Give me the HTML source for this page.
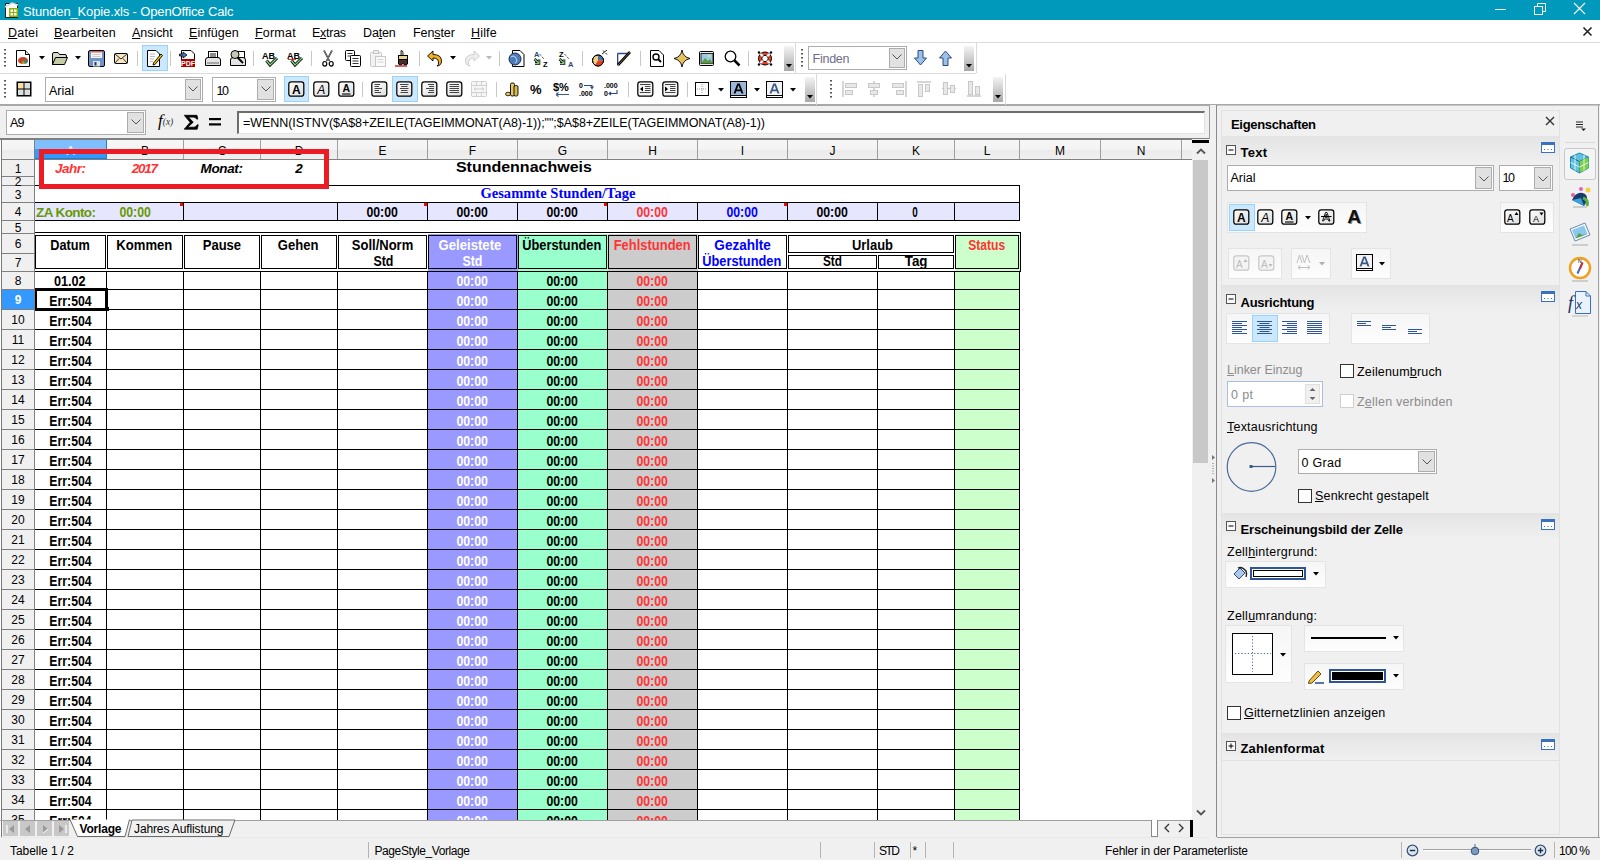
<!DOCTYPE html>
<html><head><meta charset="utf-8"><style>
html,body{margin:0;padding:0;width:1600px;height:860px;overflow:hidden;background:#fff;}
body{position:relative;font-family:"Liberation Sans",sans-serif;}
body>div,body>svg{position:absolute;}
body>div{white-space:nowrap;}
</style></head><body>
<div style="left:0px;top:0px;width:1600px;height:20px;background:#0099bc"></div>
<svg style="left:4px;top:2px;" width="16" height="16" viewBox="0 0 16 16"><rect x="1.5" y="1.5" width="12" height="14" fill="#fff" stroke="#1a2030"/><rect x="5" y="6" width="9" height="9" fill="#8fb300"/><rect x="6.5" y="7.5" width="2.5" height="2.5" fill="#fff"/><rect x="10" y="7.5" width="2.5" height="2.5" fill="#fff"/><rect x="6.5" y="11" width="2.5" height="2.5" fill="#fff"/><rect x="10" y="11" width="2.5" height="2.5" fill="#fff"/><path d="M1 5 L8 1 L14 3" stroke="#ddd" stroke-width="1.5" fill="none"/></svg>
<div style="left:23.00px;top:4.50px;font-family:'Liberation Sans',sans-serif;font-size:13px;line-height:13px;height:13px;color:#fff;letter-spacing:-0.135px;">Stunden_Kopie.xls - OpenOffice Calc</div>
<svg style="left:1494px;top:3px;" width="14" height="12" viewBox="0 0 14 12"><path d="M1 6.5 H12" stroke="#fff" stroke-width="1"/></svg>
<svg style="left:1533px;top:2px;" width="14" height="14" viewBox="0 0 14 14"><rect x="1.5" y="4.5" width="8" height="8" fill="none" stroke="#fff"/><path d="M4.5 4.5 V1.5 H12.5 V9.5 H9.5" fill="none" stroke="#fff"/></svg>
<svg style="left:1573px;top:2px;" width="14" height="14" viewBox="0 0 14 14"><path d="M1 1 L12 12 M12 1 L1 12" stroke="#fff" stroke-width="1.1"/></svg>
<div style="left:0px;top:20px;width:1600px;height:22px;background:#fff"></div>
<div style="left:0px;top:42px;width:1600px;height:1px;background:#dcdcdc"></div>
<div style="left:8.00px;top:26.92px;font-family:'Liberation Sans',sans-serif;font-size:12.5px;line-height:12.5px;height:12.5px;color:#000;letter-spacing:0.206px;"><u>D</u>atei</div>
<div style="left:54.00px;top:26.92px;font-family:'Liberation Sans',sans-serif;font-size:12.5px;line-height:12.5px;height:12.5px;color:#000;letter-spacing:0.138px;"><u>B</u>earbeiten</div>
<div style="left:132.00px;top:26.92px;font-family:'Liberation Sans',sans-serif;font-size:12.5px;line-height:12.5px;height:12.5px;color:#000;letter-spacing:-0.048px;"><u>A</u>nsicht</div>
<div style="left:189.00px;top:26.92px;font-family:'Liberation Sans',sans-serif;font-size:12.5px;line-height:12.5px;height:12.5px;color:#000;letter-spacing:0.057px;"><u>E</u>infügen</div>
<div style="left:255.00px;top:26.92px;font-family:'Liberation Sans',sans-serif;font-size:12.5px;line-height:12.5px;height:12.5px;color:#000;letter-spacing:0.203px;"><u>F</u>ormat</div>
<div style="left:312.00px;top:26.92px;font-family:'Liberation Sans',sans-serif;font-size:12.5px;line-height:12.5px;height:12.5px;color:#000;letter-spacing:-0.265px;">E<u>x</u>tras</div>
<div style="left:363.00px;top:26.92px;font-family:'Liberation Sans',sans-serif;font-size:12.5px;line-height:12.5px;height:12.5px;color:#000;letter-spacing:-0.138px;">Da<u>t</u>en</div>
<div style="left:413.00px;top:26.92px;font-family:'Liberation Sans',sans-serif;font-size:12.5px;line-height:12.5px;height:12.5px;color:#000;letter-spacing:-0.096px;">Fen<u>s</u>ter</div>
<div style="left:471.00px;top:26.92px;font-family:'Liberation Sans',sans-serif;font-size:12.5px;line-height:12.5px;height:12.5px;color:#000;letter-spacing:0.172px;"><u>H</u>ilfe</div>
<svg style="left:1582px;top:26px;" width="12" height="12" viewBox="0 0 12 12"><path d="M1.5 1.5 L9.5 9.5 M9.5 1.5 L1.5 9.5" stroke="#222" stroke-width="1.6"/></svg>
<div style="left:0px;top:43px;width:1600px;height:62px;background:#fff"></div>
<div style="left:0px;top:73px;width:976px;height:1px;background:#dadada"></div>
<div style="left:976px;top:73px;width:624px;height:1px;background:#fff"></div>
<div style="left:0px;top:104px;width:1600px;height:2px;background:#a8a8a8"></div>
<svg style="left:4px;top:49px;" width="3" height="20" viewBox="0 0 3 20"><rect x="0" y="0" width="2" height="1.5" fill="#555"/><rect x="1" y="1" width="1" height="1" fill="#999"/><rect x="0" y="4" width="2" height="1.5" fill="#555"/><rect x="1" y="5" width="1" height="1" fill="#999"/><rect x="0" y="8" width="2" height="1.5" fill="#555"/><rect x="1" y="9" width="1" height="1" fill="#999"/><rect x="0" y="12" width="2" height="1.5" fill="#555"/><rect x="1" y="13" width="1" height="1" fill="#999"/><rect x="0" y="16" width="2" height="1.5" fill="#555"/><rect x="1" y="17" width="1" height="1" fill="#999"/></svg>
<svg style="left:16px;top:50px;" width="14" height="17" viewBox="0 0 14 17"><path d="M0.5 0.5 H9.5 L13.5 4.5 V16.5 H0.5 Z" fill="#fff" stroke="#000"/><path d="M9.5 0.5 V4.5 H13.5" fill="#ddd" stroke="#000"/><ellipse cx="7" cy="10.5" rx="5" ry="3.6" fill="#c8452a"/><path d="M7 10.5 L12 10.5 A5 3.6 0 0 1 9 13.8 Z" fill="#1f8fa0"/><path d="M7 10.5 L9 13.8 A5 3.6 0 0 1 6 14 Z" fill="#b8b800"/></svg>
<svg style="left:39px;top:56px;" width="6" height="4" viewBox="0 0 6 4"><path d="M0 0 H6 L3 3.5 Z" fill="#000"/></svg>
<svg style="left:52px;top:52px;" width="16" height="13" viewBox="0 0 16 13"><path d="M0.5 2 Q0.5 0.5 2 0.5 H6 L7.5 2.5 H13 Q14.5 2.5 14.5 4 V6 H4 L0.5 12.5 Z" fill="#d9dcc4" stroke="#000"/><path d="M3.5 5.5 H15.5 L12.5 12.5 H0.5 Z" fill="#c6cba6" stroke="#000"/></svg>
<svg style="left:75px;top:56px;" width="6" height="4" viewBox="0 0 6 4"><path d="M0 0 H6 L3 3.5 Z" fill="#000"/></svg>
<svg style="left:88px;top:50px;" width="17" height="17" viewBox="0 0 17 17"><rect x="0.5" y="0.5" width="16" height="16" rx="1.5" fill="#7093c8" stroke="#000"/><rect x="3" y="1" width="11" height="7" fill="#f4f4f4"/><rect x="3" y="1" width="11" height="1.5" fill="#e06060"/><path d="M4.5 4.5 H12.5 M4.5 6.5 H12.5" stroke="#bbb" stroke-width="0.7"/><rect x="5" y="11" width="7" height="5.5" fill="#dde4ee"/><rect x="6.5" y="12" width="2" height="3.5" fill="#243a5e"/></svg>
<svg style="left:114px;top:53px;" width="14" height="11" viewBox="0 0 14 11"><rect x="0.5" y="0.5" width="13" height="10" rx="1" fill="#f6e7c4" stroke="#000"/><path d="M1 1 L7 6 L13 1 M1 10 L5 5.5 M13 10 L9 5.5" stroke="#000" stroke-width="0.8" fill="none"/></svg>
<div style="left:137px;top:51px;width:1px;height:15px;background:#c8c8c8"></div>
<div style="left:142px;top:45px;width:24px;height:24px;background:#cce8ff;border:1px solid #99d1ff"></div>
<svg style="left:147px;top:50px;" width="16" height="17" viewBox="0 0 16 17"><path d="M0.5 0.5 H9 L12.5 4 V16.5 H0.5 Z" fill="#fff" stroke="#000"/><path d="M3 4H8M3 6.5H8M3 9H7M3 11.5H6" stroke="#aaa" stroke-width="0.8"/><path d="M6.5 13 L14 4 L15.5 5.5 L8 14.5 L6 15 Z" fill="#f2c200" stroke="#000" stroke-width="0.9"/></svg>
<div style="left:170px;top:51px;width:1px;height:15px;background:#c8c8c8"></div>
<svg style="left:179px;top:50px;" width="17" height="17" viewBox="0 0 17 17"><path d="M2.5 0.5 H12 L15.5 4 V16.5 H2.5 Z" fill="#fff" stroke="#000"/><rect x="2" y="9" width="14" height="8" fill="#a80000"/><text x="9" y="15.8" font-family="Liberation Sans" font-weight="bold" font-size="7" fill="#fff" text-anchor="middle">PDF</text><path d="M0.5 4 H4 V2 L8 5 L4 8 V6 H0.5 Z" fill="#4a7ab8" stroke="#000" stroke-width="0.8"/></svg>
<svg style="left:205px;top:51px;" width="16" height="16" viewBox="0 0 16 16"><rect x="3.5" y="0.5" width="9" height="8" fill="#fff" stroke="#000"/><path d="M5 3H11M5 5H11" stroke="#000" stroke-width="0.9"/><path d="M0.5 9 Q0.5 6.5 3 6.5 H13 Q15.5 6.5 15.5 9 V14.5 H0.5 Z" fill="#e4e4e4" stroke="#000"/><path d="M2 12 H14" stroke="#666" stroke-width="1"/></svg>
<svg style="left:230px;top:50px;" width="16" height="17" viewBox="0 0 16 17"><rect x="5.5" y="1.5" width="9" height="8" fill="#fff" stroke="#000"/><path d="M0.5 10 Q0.5 7.5 3 7.5 H13 Q15.5 7.5 15.5 10 V15.5 H0.5 Z" fill="#e4e4e4" stroke="#000"/><circle cx="5" cy="4.5" r="4" fill="#c8c8b4" stroke="#000"/><path d="M7.5 7.5 L13 13" stroke="#000" stroke-width="1.8"/></svg>
<div style="left:253px;top:51px;width:1px;height:15px;background:#c8c8c8"></div>
<svg style="left:262px;top:50px;" width="17" height="17" viewBox="0 0 17 17"><text x="0" y="9" font-family="Liberation Sans" font-weight="bold" font-size="9" fill="#000">AB</text><path d="M4.5 10.5 L8 15 L15 8" stroke="#000" stroke-width="3" fill="none"/><path d="M4.5 10.5 L8 15 L15 8" stroke="#7ed07e" stroke-width="1.4" fill="none"/></svg>
<svg style="left:287px;top:50px;" width="17" height="17" viewBox="0 0 17 17"><text x="0" y="9" font-family="Liberation Sans" font-weight="bold" font-size="9" fill="#000">AB</text><path d="M1 10 l1 -1 l1 1 l1 -1 l1 1 l1 -1 l1 1 l1 -1 l1 1" stroke="#e00" stroke-width="0.8" fill="none"/><path d="M4.5 10.5 L8 15 L15 8" stroke="#000" stroke-width="3" fill="none"/><path d="M4.5 10.5 L8 15 L15 8" stroke="#7ed07e" stroke-width="1.4" fill="none"/></svg>
<div style="left:311px;top:51px;width:1px;height:15px;background:#c8c8c8"></div>
<svg style="left:322px;top:50px;" width="12" height="17" viewBox="0 0 12 17"><path d="M2 0.5 L7.5 11 M10 0.5 L4.5 11" stroke="#000" stroke-width="1.6"/><path d="M2 0.5 L7.5 11 M10 0.5 L4.5 11" stroke="#d8d8c8" stroke-width="0.6"/><ellipse cx="2.8" cy="13.8" rx="2" ry="2.3" fill="none" stroke="#000" stroke-width="1.2"/><ellipse cx="9.2" cy="13.8" rx="2" ry="2.3" fill="none" stroke="#000" stroke-width="1.2"/></svg>
<svg style="left:345px;top:50px;" width="16" height="17" viewBox="0 0 16 17"><rect x="0.5" y="0.5" width="9" height="10" rx="1" fill="#fff" stroke="#000"/><path d="M2.5 3.5H7.5M2.5 6H7.5" stroke="#000" stroke-width="0.8"/><rect x="5.5" y="5.5" width="10" height="11" rx="1" fill="#fff" stroke="#000"/><path d="M7.5 8.5H13.5M7.5 11H13.5M7.5 13.5H13.5" stroke="#000" stroke-width="0.8"/></svg>
<svg style="left:370px;top:50px;" width="16" height="17" viewBox="0 0 16 17"><rect x="0.5" y="2.5" width="11" height="14" rx="1" fill="#f2f2f2" stroke="#c8c8c8"/><rect x="3.5" y="0.5" width="5" height="3" fill="#eee" stroke="#c8c8c8"/><rect x="5.5" y="6.5" width="10" height="10" fill="#fafafa" stroke="#c8c8c8"/><path d="M7.5 9.5H13.5M7.5 12H13.5" stroke="#ccc" stroke-width="0.8"/></svg>
<svg style="left:395px;top:50px;" width="16" height="17" viewBox="0 0 16 17"><path d="M6 0.5 Q8 0.5 8 2.5 V5.5 H6 Z" fill="#d8d2a8" stroke="#000" stroke-width="0.8"/><rect x="3.5" y="5.5" width="9" height="4" fill="#e8d490" stroke="#000"/><path d="M3.5 9.5 H12.5 V14 L10 15 L8 13.5 L5.5 15 L3.5 14 Z" fill="#4a2c2c" stroke="#000"/><path d="M0 16 H12" stroke="#b82020" stroke-width="1.4"/></svg>
<div style="left:419px;top:51px;width:1px;height:15px;background:#c8c8c8"></div>
<svg style="left:427px;top:50px;" width="15" height="17" viewBox="0 0 15 17"><path d="M6 1 L0.5 6 L6 11 V8 Q11 8 11.5 12 Q12 15 10 16 Q14.5 15.5 14.5 11 Q14.5 4.5 6 4.5 Z" fill="#f0b020" stroke="#000" stroke-width="0.9"/></svg>
<svg style="left:450px;top:56px;" width="6" height="4" viewBox="0 0 6 4"><path d="M0 0 H6 L3 3.5 Z" fill="#000"/></svg>
<svg style="left:465px;top:50px;" width="15" height="17" viewBox="0 0 15 17"><path d="M9 1 L14.5 6 L9 11 V8 Q4 8 3.5 12 Q3 15 5 16 Q0.5 15.5 0.5 11 Q0.5 4.5 9 4.5 Z" fill="#eee" stroke="#c8c8c8" stroke-width="0.9"/></svg>
<svg style="left:486px;top:56px;" width="6" height="4" viewBox="0 0 6 4"><path d="M0 0 H6 L3 3.5 Z" fill="#b8b8b8"/></svg>
<div style="left:499px;top:51px;width:1px;height:15px;background:#c8c8c8"></div>
<svg style="left:508px;top:50px;" width="17" height="17" viewBox="0 0 17 17"><path d="M4.5 0.5 H12 L16 4.5 V16.5 H4.5 Z" fill="#fff" stroke="#000"/><circle cx="7" cy="9" r="6" fill="#4d7ab8" stroke="#1b2b45"/><path d="M3 7 Q6 5 8 8 Q10 11 7 13" stroke="#a8c8e8" stroke-width="1.2" fill="none"/></svg>
<svg style="left:533px;top:50px;" width="17" height="17" viewBox="0 0 17 17"><text x="1" y="7" font-family="Liberation Sans" font-weight="bold" font-size="7.5" fill="#2a4a7a">A</text><text x="10" y="16.5" font-family="Liberation Sans" font-weight="bold" font-size="7.5" fill="#000">Z</text><path d="M6.5 4 L11 9" stroke="#000" stroke-dasharray="1 1" stroke-width="0.9"/><path d="M1.5 9 L6 13.5 M6 9.5 V13.5 H2" stroke="#000" stroke-width="2.6" fill="none"/><path d="M1.5 9 L6 13.5 M6 9.5 V13.5 H2" stroke="#8cc88c" stroke-width="1.1" fill="none"/></svg>
<svg style="left:558px;top:50px;" width="17" height="17" viewBox="0 0 17 17"><text x="1" y="7" font-family="Liberation Sans" font-weight="bold" font-size="7.5" fill="#000">Z</text><text x="10" y="16.5" font-family="Liberation Sans" font-weight="bold" font-size="7.5" fill="#2a4a7a">A</text><path d="M6.5 4 L11 9" stroke="#000" stroke-dasharray="1 1" stroke-width="0.9"/><path d="M1.5 9 L6 13.5 M6 9.5 V13.5 H2" stroke="#000" stroke-width="2.6" fill="none"/><path d="M1.5 9 L6 13.5 M6 9.5 V13.5 H2" stroke="#8cc88c" stroke-width="1.1" fill="none"/></svg>
<div style="left:582px;top:51px;width:1px;height:15px;background:#c8c8c8"></div>
<svg style="left:592px;top:50px;" width="16" height="17" viewBox="0 0 16 17"><circle cx="6" cy="10.5" r="5.5" fill="#f0d080" stroke="#000"/><path d="M6 10.5 L6 5 A5.5 5.5 0 0 1 11.5 10.5 Z" fill="#4a70b0"/><path d="M6 10.5 L11.5 10.5 A5.5 5.5 0 0 1 3 15.2 Z" fill="#e04020"/><circle cx="6" cy="10.5" r="5.5" fill="none" stroke="#000"/><path d="M10 4 L15 0 M11 0.5 l1.5 1.5 M13.5 3 l1.5 1.5" stroke="#000" stroke-width="0.9"/></svg>
<svg style="left:617px;top:50px;" width="15" height="17" viewBox="0 0 15 17"><path d="M0.5 3.5 H12 M0.5 3.5 V15.5" stroke="#2a4a8a" stroke-width="1.6"/><path d="M1 15 L13 2" stroke="#000" stroke-width="2.6"/><path d="M1 15 L13 2" stroke="#7a6040" stroke-width="1"/></svg>
<div style="left:640px;top:51px;width:1px;height:15px;background:#c8c8c8"></div>
<svg style="left:650px;top:50px;" width="14" height="17" viewBox="0 0 14 17"><path d="M0.5 0.5 H9 L13.5 5 V16.5 H0.5 Z" fill="#fff" stroke="#000"/><circle cx="6" cy="7" r="3" fill="#fff" stroke="#000" stroke-width="1.4"/><path d="M8 9 L11 12" stroke="#000" stroke-width="2"/></svg>
<svg style="left:674px;top:50px;" width="16" height="17" viewBox="0 0 16 17"><path d="M8 0 Q9 7 16 8.5 Q9 10 8 17 Q7 10 0 8.5 Q7 7 8 0 Z" fill="#e8c060" stroke="#000" stroke-width="0.9"/></svg>
<svg style="left:699px;top:50px;" width="16" height="17" viewBox="0 0 16 17"><rect x="0.5" y="1.5" width="14" height="14" rx="1" fill="#eee" stroke="#000"/><rect x="2" y="3.5" width="12" height="10" fill="#9ec8e8" stroke="#000" stroke-width="0.8"/><path d="M2 13.5 L6 8 L9 11 L11 9 L14 13.5 Z" fill="#5a9a40"/><circle cx="10" cy="6" r="1.2" fill="#f8e060"/></svg>
<svg style="left:724px;top:50px;" width="17" height="17" viewBox="0 0 17 17"><circle cx="6.5" cy="6.5" r="5.3" fill="#fff" stroke="#000" stroke-width="1.3"/><path d="M10.5 10.5 L15.5 15.5" stroke="#000" stroke-width="2.5"/></svg>
<div style="left:748px;top:51px;width:1px;height:15px;background:#c8c8c8"></div>
<svg style="left:757px;top:50px;" width="16" height="17" viewBox="0 0 16 17"><circle cx="8" cy="8.5" r="6.5" fill="#e84020" stroke="#000"/><circle cx="8" cy="8.5" r="3.2" fill="#fff" stroke="#000"/><path d="M3.5 4 L5.8 6.3 M12.5 4 L10.2 6.3 M3.5 13 L5.8 10.7 M12.5 13 L10.2 10.7" stroke="#fff" stroke-width="2.2"/><circle cx="2" cy="2.5" r="1.2" fill="#000"/><circle cx="14" cy="2.5" r="1.2" fill="#000"/><circle cx="2" cy="14.5" r="1.2" fill="#000"/><circle cx="14" cy="14.5" r="1.2" fill="#000"/></svg>
<div style="left:784px;top:46px;width:10px;height:25px;background:linear-gradient(#f4f4f4,#a8a8a8)"></div>
<svg style="left:786px;top:64px;" width="6" height="4" viewBox="0 0 6 4"><path d="M0 0 H6 L3 3.5 Z" fill="#000"/></svg>
<div style="left:795px;top:43px;width:1px;height:30px;background:#dadada"></div>
<div style="left:976px;top:43px;width:1px;height:30px;background:#dadada"></div>
<svg style="left:801px;top:49px;" width="3" height="20" viewBox="0 0 3 20"><rect x="0" y="0" width="2" height="1.5" fill="#555"/><rect x="1" y="1" width="1" height="1" fill="#999"/><rect x="0" y="4" width="2" height="1.5" fill="#555"/><rect x="1" y="5" width="1" height="1" fill="#999"/><rect x="0" y="8" width="2" height="1.5" fill="#555"/><rect x="1" y="9" width="1" height="1" fill="#999"/><rect x="0" y="12" width="2" height="1.5" fill="#555"/><rect x="1" y="13" width="1" height="1" fill="#999"/><rect x="0" y="16" width="2" height="1.5" fill="#555"/><rect x="1" y="17" width="1" height="1" fill="#999"/></svg>
<div style="left:808px;top:46px;width:99px;height:24px;background:#fff;border:1px solid #adadad;box-sizing:border-box"></div>
<div style="left:889px;top:48px;width:16px;height:20px;background:#e1e1e1;border:1px solid #adadad;box-sizing:border-box"></div>
<svg style="left:892px;top:54px;" width="10" height="6" viewBox="0 0 10 6"><path d="M0.5 0.5 L5 5 L9.5 0.5" stroke="#555" fill="none"/></svg>
<div style="left:812.50px;top:53.42px;font-family:'Liberation Sans',sans-serif;font-size:12.5px;line-height:12.5px;height:12.5px;color:#6d6d8d;letter-spacing:-0.245px;">Finden</div>
<svg style="left:914px;top:50px;" width="13" height="16" viewBox="0 0 13 16"><path d="M4 0.5 H9 V8 H12.5 L6.5 15 L0.5 8 H4 Z" fill="#9cc0e8" stroke="#2a4a80"/></svg>
<svg style="left:939px;top:50px;" width="13" height="16" viewBox="0 0 13 16"><path d="M4 15.5 H9 V8 H12.5 L6.5 1 L0.5 8 H4 Z" fill="#9cc0e8" stroke="#2a4a80"/></svg>
<div style="left:964px;top:46px;width:10px;height:25px;background:linear-gradient(#f4f4f4,#a8a8a8)"></div>
<svg style="left:966px;top:64px;" width="6" height="4" viewBox="0 0 6 4"><path d="M0 0 H6 L3 3.5 Z" fill="#000"/></svg>
<svg style="left:4px;top:80px;" width="3" height="20" viewBox="0 0 3 20"><rect x="0" y="0" width="2" height="1.5" fill="#555"/><rect x="1" y="1" width="1" height="1" fill="#999"/><rect x="0" y="4" width="2" height="1.5" fill="#555"/><rect x="1" y="5" width="1" height="1" fill="#999"/><rect x="0" y="8" width="2" height="1.5" fill="#555"/><rect x="1" y="9" width="1" height="1" fill="#999"/><rect x="0" y="12" width="2" height="1.5" fill="#555"/><rect x="1" y="13" width="1" height="1" fill="#999"/><rect x="0" y="16" width="2" height="1.5" fill="#555"/><rect x="1" y="17" width="1" height="1" fill="#999"/></svg>
<svg style="left:16px;top:81px;" width="16" height="16" viewBox="0 0 16 16"><rect x="0.5" y="0.5" width="15" height="15" fill="#000"/><rect x="2" y="2" width="5.5" height="5.5" fill="#f8e0a0"/><rect x="8.5" y="2" width="5.5" height="5.5" fill="#ddd"/><rect x="2" y="8.5" width="5.5" height="5.5" fill="#ddd"/><rect x="8.5" y="8.5" width="5.5" height="5.5" fill="#ddd"/></svg>
<div style="left:45px;top:77px;width:158px;height:25px;background:#fff;border:1px solid #adadad;box-sizing:border-box"></div>
<div style="left:185px;top:79px;width:16px;height:21px;background:#e1e1e1;border:1px solid #adadad;box-sizing:border-box"></div>
<svg style="left:188px;top:86px;" width="10" height="6" viewBox="0 0 10 6"><path d="M0.5 0.5 L5 5 L9.5 0.5" stroke="#555" fill="none"/></svg>
<div style="left:49.00px;top:84.92px;font-family:'Liberation Sans',sans-serif;font-size:12.5px;line-height:12.5px;height:12.5px;color:#000;letter-spacing:-0.003px;">Arial</div>
<div style="left:212px;top:77px;width:64px;height:25px;background:#fff;border:1px solid #adadad;box-sizing:border-box"></div>
<div style="left:257px;top:79px;width:17px;height:21px;background:#e1e1e1;border:1px solid #adadad;box-sizing:border-box"></div>
<svg style="left:261px;top:86px;" width="10" height="6" viewBox="0 0 10 6"><path d="M0.5 0.5 L5 5 L9.5 0.5" stroke="#555" fill="none"/></svg>
<div style="left:216.50px;top:84.92px;font-family:'Liberation Sans',sans-serif;font-size:12.5px;line-height:12.5px;height:12.5px;color:#000;letter-spacing:-1.400px;">10</div>
<div style="left:284px;top:76px;width:23px;height:24px;background:#cce8ff;border:1px solid #99d1ff"></div>
<svg style="left:288px;top:81px;" width="17" height="16" viewBox="0 0 17 16"><defs><linearGradient id="g" x1="0" y1="0" x2="1" y2="1"><stop offset="0" stop-color="#fff"/><stop offset="1" stop-color="#ddd"/></linearGradient></defs><rect x="0.8" y="0.8" width="15" height="14.4" rx="2.5" fill="url(#g)" stroke="#000" stroke-width="1.25"/><text x="8.3" y="12.6" font-family="Liberation Sans" font-weight="bold" font-size="12" fill="#000" text-anchor="middle">A</text></svg>
<svg style="left:313px;top:81px;" width="17" height="16" viewBox="0 0 17 16"><defs><linearGradient id="g" x1="0" y1="0" x2="1" y2="1"><stop offset="0" stop-color="#fff"/><stop offset="1" stop-color="#ddd"/></linearGradient></defs><rect x="0.8" y="0.8" width="15" height="14.4" rx="2.5" fill="url(#g)" stroke="#000" stroke-width="1.25"/><text x="8.3" y="12.6" font-family="Liberation Sans" font-style="italic" font-size="12" fill="#000" text-anchor="middle">A</text></svg>
<svg style="left:338px;top:81px;" width="17" height="16" viewBox="0 0 17 16"><defs><linearGradient id="g" x1="0" y1="0" x2="1" y2="1"><stop offset="0" stop-color="#fff"/><stop offset="1" stop-color="#ddd"/></linearGradient></defs><rect x="0.8" y="0.8" width="15" height="14.4" rx="2.5" fill="url(#g)" stroke="#000" stroke-width="1.25"/><text x="8.3" y="11.2" font-family="Liberation Sans" font-weight="bold" font-size="10.5" fill="#000" text-anchor="middle">A</text><path d="M4 13 H12.5" stroke="#000" stroke-width="1.1"/></svg>
<div style="left:362px;top:82px;width:1px;height:15px;background:#c8c8c8"></div>
<svg style="left:371px;top:81px;" width="17" height="16" viewBox="0 0 17 16"><defs><linearGradient id="g2" x1="0" y1="0" x2="1" y2="1"><stop offset="0" stop-color="#fff"/><stop offset="1" stop-color="#ddd"/></linearGradient></defs><rect x="0.8" y="0.8" width="15" height="14.4" rx="2.5" fill="url(#g2)" stroke="#000" stroke-width="1.25"/><path d="M3.5 3.5 H9" stroke="#444" stroke-width="1"/><path d="M3.5 5.5 H8" stroke="#444" stroke-width="1"/><path d="M3.5 7.5 H11" stroke="#444" stroke-width="1"/><path d="M3.5 9.5 H8" stroke="#444" stroke-width="1"/><path d="M3.5 11.5 H10" stroke="#444" stroke-width="1"/></svg>
<div style="left:392px;top:76px;width:24px;height:24px;background:#cce8ff;border:1px solid #99d1ff"></div>
<svg style="left:396px;top:81px;" width="17" height="16" viewBox="0 0 17 16"><defs><linearGradient id="g2" x1="0" y1="0" x2="1" y2="1"><stop offset="0" stop-color="#fff"/><stop offset="1" stop-color="#ddd"/></linearGradient></defs><rect x="0.8" y="0.8" width="15" height="14.4" rx="2.5" fill="url(#g2)" stroke="#000" stroke-width="1.25"/><path d="M4 3.5 H12.5" stroke="#444" stroke-width="1"/><path d="M5 5.5 H11.5" stroke="#444" stroke-width="1"/><path d="M4 7.5 H12.5" stroke="#444" stroke-width="1"/><path d="M5 9.5 H11.5" stroke="#444" stroke-width="1"/><path d="M4.5 11.5 H12" stroke="#444" stroke-width="1"/></svg>
<svg style="left:421px;top:81px;" width="17" height="16" viewBox="0 0 17 16"><defs><linearGradient id="g2" x1="0" y1="0" x2="1" y2="1"><stop offset="0" stop-color="#fff"/><stop offset="1" stop-color="#ddd"/></linearGradient></defs><rect x="0.8" y="0.8" width="15" height="14.4" rx="2.5" fill="url(#g2)" stroke="#000" stroke-width="1.25"/><path d="M7 3.5 H13" stroke="#444" stroke-width="1"/><path d="M8 5.5 H13" stroke="#444" stroke-width="1"/><path d="M5 7.5 H13" stroke="#444" stroke-width="1"/><path d="M8 9.5 H13" stroke="#444" stroke-width="1"/><path d="M7 11.5 H13" stroke="#444" stroke-width="1"/></svg>
<svg style="left:446px;top:81px;" width="17" height="16" viewBox="0 0 17 16"><defs><linearGradient id="g2" x1="0" y1="0" x2="1" y2="1"><stop offset="0" stop-color="#fff"/><stop offset="1" stop-color="#ddd"/></linearGradient></defs><rect x="0.8" y="0.8" width="15" height="14.4" rx="2.5" fill="url(#g2)" stroke="#000" stroke-width="1.25"/><path d="M3.5 3.5 H13" stroke="#444" stroke-width="1"/><path d="M3.5 5.5 H13" stroke="#444" stroke-width="1"/><path d="M3.5 7.5 H13" stroke="#444" stroke-width="1"/><path d="M3.5 9.5 H13" stroke="#444" stroke-width="1"/><path d="M3.5 11.5 H13" stroke="#444" stroke-width="1"/></svg>
<svg style="left:471px;top:81px;" width="16" height="16" viewBox="0 0 16 16"><rect x="0.5" y="0.5" width="15" height="15" rx="1" fill="#f6f6f6" stroke="#d0d0d0"/><path d="M0.5 4.5 H15.5 M0.5 11.5 H15.5 M5.5 0.5 V4.5 M10.5 0.5 V4.5 M5.5 11.5 V15.5 M10.5 11.5 V15.5 M3 8 H13 M3 8 l2 -1.5 M3 8 l2 1.5 M13 8 l-2 -1.5 M13 8 l-2 1.5" stroke="#d0d0d0" fill="none"/></svg>
<div style="left:496px;top:82px;width:1px;height:15px;background:#c8c8c8"></div>
<svg style="left:505px;top:81px;" width="14" height="16" viewBox="0 0 14 16"><ellipse cx="3" cy="13" rx="2.5" ry="1.8" fill="#e8c860" stroke="#000" stroke-width="0.8"/><rect x="5.5" y="2" width="4" height="13" rx="1.5" fill="#e8c860" stroke="#000" stroke-width="0.9"/><rect x="9" y="4.5" width="4" height="10.5" rx="1.5" fill="#d8b850" stroke="#000" stroke-width="0.9"/></svg>
<svg style="left:530px;top:82px;" width="14" height="14" viewBox="0 0 14 14"><text x="0" y="12" font-family="Liberation Sans" font-weight="bold" font-size="13" fill="#000">%</text></svg>
<svg style="left:553px;top:80px;" width="18" height="17" viewBox="0 0 18 17"><text x="0" y="11" font-family="Liberation Sans" font-weight="bold" font-size="11" fill="#000">$%</text><path d="M3 14.5 H16 M3 14.5 l2.5 -2 M3 14.5 l2.5 2" stroke="#3a5a90" stroke-width="1.2" fill="none"/></svg>
<svg style="left:579px;top:81px;" width="16" height="16" viewBox="0 0 16 16"><text x="0" y="7" font-family="Liberation Sans" font-weight="bold" font-size="7" fill="#000">0</text><text x="0" y="15" font-family="Liberation Sans" font-weight="bold" font-size="7" fill="#000">.000</text><path d="M5 4.5 H13 V7 M11.5 5.5 L13 7.5 L14.5 5.5" stroke="#2a4a80" stroke-width="1.1" fill="none"/></svg>
<svg style="left:604px;top:81px;" width="16" height="16" viewBox="0 0 16 16"><text x="0" y="7" font-family="Liberation Sans" font-weight="bold" font-size="7" fill="#000">.000</text><text x="0" y="15" font-family="Liberation Sans" font-weight="bold" font-size="7" fill="#000">0</text><path d="M13 9 V12.5 H5.5 M7 11 L5 12.5 L7 14" stroke="#2a4a80" stroke-width="1.1" fill="none"/></svg>
<div style="left:628px;top:82px;width:1px;height:15px;background:#c8c8c8"></div>
<svg style="left:637px;top:81px;" width="17" height="16" viewBox="0 0 17 16"><rect x="0.8" y="0.8" width="15" height="14.4" rx="2.5" fill="#f4f4f4" stroke="#000" stroke-width="1.25"/><path d="M3 3.5 H13.5 M8 5.5 H13.5 M8 7.5 H13.5 M8 9.5 H13.5 M3 11.5 H13.5" stroke="#444" stroke-width="1"/><path d="M6 5.5 L3 8 L6 10.5 Z" fill="#000"/></svg>
<svg style="left:662px;top:81px;" width="17" height="16" viewBox="0 0 17 16"><rect x="0.8" y="0.8" width="15" height="14.4" rx="2.5" fill="#f4f4f4" stroke="#000" stroke-width="1.25"/><path d="M3 3.5 H13.5 M8 5.5 H13.5 M8 7.5 H13.5 M8 9.5 H13.5 M3 11.5 H13.5" stroke="#444" stroke-width="1"/><path d="M3 5.5 L6 8 L3 10.5 Z" fill="#000"/></svg>
<div style="left:687px;top:82px;width:1px;height:15px;background:#c8c8c8"></div>
<svg style="left:695px;top:81px;" width="14" height="16" viewBox="0 0 14 16"><rect x="0.5" y="1.5" width="13" height="13" fill="#fff" stroke="#000"/><path d="M7 3 V13 M2 8 H12" stroke="#999" stroke-dasharray="1 1"/></svg>
<svg style="left:718px;top:88px;" width="6" height="4" viewBox="0 0 6 4"><path d="M0 0 H6 L3 3.5 Z" fill="#000"/></svg>
<svg style="left:730px;top:81px;" width="17" height="17" viewBox="0 0 17 17"><rect x="0.5" y="0.5" width="16" height="14" fill="#9cb8d8" stroke="#000"/><path d="M3.5 12.5 L7.3 2.5 H9.7 L13.5 12.5 H11.5 L10.7 10.3 H6.3 L5.5 12.5 Z M6.9 8.5 H10.1 L8.5 4.2 Z" fill="#000"/><rect x="0.5" y="14.5" width="16" height="2" fill="#fff" stroke="#000"/></svg>
<svg style="left:754px;top:88px;" width="6" height="4" viewBox="0 0 6 4"><path d="M0 0 H6 L3 3.5 Z" fill="#000"/></svg>
<svg style="left:766px;top:81px;" width="17" height="17" viewBox="0 0 17 17"><rect x="0.5" y="0.5" width="16" height="14" fill="#f4f4f4" stroke="#000"/><path d="M3.5 12.5 L7.3 2.5 H9.7 L13.5 12.5 H11.5 L10.7 10.3 H6.3 L5.5 12.5 Z M6.9 8.5 H10.1 L8.5 4.2 Z" fill="#3a5a88"/><rect x="0.5" y="14.5" width="16" height="2" fill="#fff" stroke="#000"/></svg>
<svg style="left:790px;top:88px;" width="6" height="4" viewBox="0 0 6 4"><path d="M0 0 H6 L3 3.5 Z" fill="#000"/></svg>
<div style="left:805px;top:77px;width:10px;height:25px;background:linear-gradient(#f4f4f4,#a8a8a8)"></div>
<svg style="left:807px;top:95px;" width="6" height="4" viewBox="0 0 6 4"><path d="M0 0 H6 L3 3.5 Z" fill="#000"/></svg>
<div style="left:816px;top:74px;width:1px;height:31px;background:#dadada"></div>
<div style="left:1005px;top:74px;width:1px;height:31px;background:#dadada"></div>
<svg style="left:830px;top:80px;" width="3" height="20" viewBox="0 0 3 20"><rect x="0" y="0" width="2" height="1.5" fill="#555"/><rect x="1" y="1" width="1" height="1" fill="#999"/><rect x="0" y="4" width="2" height="1.5" fill="#555"/><rect x="1" y="5" width="1" height="1" fill="#999"/><rect x="0" y="8" width="2" height="1.5" fill="#555"/><rect x="1" y="9" width="1" height="1" fill="#999"/><rect x="0" y="12" width="2" height="1.5" fill="#555"/><rect x="1" y="13" width="1" height="1" fill="#999"/><rect x="0" y="16" width="2" height="1.5" fill="#555"/><rect x="1" y="17" width="1" height="1" fill="#999"/></svg>
<svg style="left:842px;top:81px;" width="16" height="16" viewBox="0 0 16 16"><path d="M1 0 V16" stroke="#c8c8c8" stroke-width="1.5"/><rect x="3.5" y="2.5" width="11" height="4" fill="#e8e8e8" stroke="#c8c8c8"/><rect x="3.5" y="9.5" width="7" height="4" fill="#e8e8e8" stroke="#c8c8c8"/></svg>
<svg style="left:867px;top:81px;" width="16" height="16" viewBox="0 0 16 16"><path d="M7 0 V16" stroke="#c8c8c8" stroke-width="1.5"/><rect x="1.5" y="2.5" width="11" height="4" fill="#e8e8e8" stroke="#c8c8c8"/><rect x="3.5" y="9.5" width="7" height="4" fill="#e8e8e8" stroke="#c8c8c8"/></svg>
<svg style="left:891px;top:81px;" width="16" height="16" viewBox="0 0 16 16"><path d="M15 0 V16" stroke="#c8c8c8" stroke-width="1.5"/><rect x="1.5" y="2.5" width="11" height="4" fill="#e8e8e8" stroke="#c8c8c8"/><rect x="5.5" y="9.5" width="7" height="4" fill="#e8e8e8" stroke="#c8c8c8"/></svg>
<svg style="left:917px;top:81px;" width="16" height="16" viewBox="0 0 16 16"><path d="M0 1 H14" stroke="#c8c8c8" stroke-width="1.5"/><rect x="1.5" y="3.5" width="4" height="12" fill="#e8e8e8" stroke="#c8c8c8"/><rect x="8.5" y="3.5" width="4" height="7" fill="#e8e8e8" stroke="#c8c8c8"/></svg>
<svg style="left:942px;top:81px;" width="16" height="16" viewBox="0 0 16 16"><path d="M0 7.5 H14" stroke="#c8c8c8" stroke-width="1.5"/><rect x="1.5" y="1.5" width="4" height="12" fill="#e8e8e8" stroke="#c8c8c8"/><rect x="8.5" y="4.5" width="4" height="7" fill="#e8e8e8" stroke="#c8c8c8"/></svg>
<svg style="left:967px;top:81px;" width="16" height="16" viewBox="0 0 16 16"><path d="M0 15 H14" stroke="#c8c8c8" stroke-width="1.5"/><rect x="1.5" y="0.5" width="4" height="13" fill="#e8e8e8" stroke="#c8c8c8"/><rect x="8.5" y="5.5" width="4" height="8" fill="#e8e8e8" stroke="#c8c8c8"/></svg>
<div style="left:993px;top:77px;width:10px;height:25px;background:linear-gradient(#f4f4f4,#a8a8a8)"></div>
<svg style="left:995px;top:95px;" width="6" height="4" viewBox="0 0 6 4"><path d="M0 0 H6 L3 3.5 Z" fill="#000"/></svg>
<div style="left:0px;top:106px;width:1600px;height:32px;background:#f0f0f0"></div>
<div style="left:0px;top:138px;width:1210px;height:2px;background:#808080"></div>
<div style="left:1209px;top:106px;width:1px;height:33px;background:#9a9a9a"></div>
<div style="left:6px;top:110px;width:140px;height:25px;background:#fff;border:1px solid #adadad;box-sizing:border-box"></div>
<div style="left:127px;top:112px;width:17px;height:21px;background:#e1e1e1;border:1px solid #adadad;box-sizing:border-box"></div>
<svg style="left:131px;top:119px;" width="10" height="6" viewBox="0 0 10 6"><path d="M0.5 0.5 L5 5 L9.5 0.5" stroke="#555" fill="none"/></svg>
<div style="left:10.00px;top:117.42px;font-family:'Liberation Sans',sans-serif;font-size:12.5px;line-height:12.5px;height:12.5px;color:#000;letter-spacing:-0.787px;">A9</div>
<div style="left:158px;top:111px;height:20px;line-height:20px;color:#000;font-family:'Liberation Serif',serif;font-size:17px;"><i>f</i><span style="font-size:9.5px;vertical-align:1px;color:#333"><i>(x)</i></span></div>
<svg style="left:183px;top:114px;" width="16" height="16" viewBox="0 0 16 16"><g transform="translate(0.5 0.6) scale(0.95 0.9)"><path d="M0.8 0.8 H14.2 L15 5 H13.8 Q13 2.8 10.5 2.8 H5.2 L10.2 8.4 L4.5 14 H11.2 Q13.5 14 14.4 11.4 H15.5 L14.4 16.2 H0.8 L7 8.6 Z" fill="#000" stroke="#000" stroke-width="0.9"/></g></svg>
<svg style="left:208px;top:117px;" width="15" height="10" viewBox="0 0 15 10"><rect x="1" y="1" width="12" height="2.2" fill="#000"/><rect x="1" y="6.3" width="12" height="2.2" fill="#000"/></svg>
<div style="left:237px;top:111px;width:968px;height:23px;background:#fff;border-top:2px solid #6d6d6d;border-left:2px solid #6d6d6d;border-right:1px solid #e3e3e3;border-bottom:1px solid #e3e3e3;box-sizing:border-box"></div>
<div style="left:243.00px;top:117.42px;font-family:'Liberation Sans',sans-serif;font-size:12.5px;line-height:12.5px;height:12.5px;color:#000;letter-spacing:-0.050px;">=WENN(ISTNV($A$8+ZEILE(TAGEIMMONAT(A8)-1));"";$A$8+ZEILE(TAGEIMMONAT(A8)-1))</div>
<div style="left:0px;top:140px;width:1192px;height:680px;background:#fff"></div>
<div style="left:1px;top:140px;width:1191px;height:19px;background:linear-gradient(#f7f7f7 0%,#f3f3f3 50%,#ebebeb 51%,#f0f0f0 100%)"></div>
<div style="left:1px;top:159px;width:1191px;height:1px;background:#808080"></div>
<div style="left:1px;top:139px;width:1px;height:698px;background:#7a7a7a"></div>
<div style="left:2px;top:160px;width:32px;height:660px;background:#f0f0f0"></div>
<div style="left:34px;top:140px;width:1px;height:680px;background:#808080"></div>
<div style="left:35px;top:140px;width:71px;height:9px;background:#80bfff"></div>
<div style="left:35px;top:149px;width:71px;height:10px;background:#3399ff"></div>
<div style="left:35px;top:158px;width:72px;height:1px;background:#1e7fd8"></div>
<div style="left:106px;top:140px;width:1px;height:19px;background:#1e7fd8"></div>
<div style="left:-229.50px;top:145.34px;width:600px;text-align:center;font-family:'Liberation Sans',sans-serif;font-size:12px;line-height:12px;height:12px;color:#fff;letter-spacing:0.000px;">A</div>
<div style="left:183px;top:140px;width:1px;height:19px;background:#a0a0a0"></div>
<div style="left:-155.00px;top:145.34px;width:600px;text-align:center;font-family:'Liberation Sans',sans-serif;font-size:12px;line-height:12px;height:12px;color:#000;letter-spacing:0.000px;">B</div>
<div style="left:260px;top:140px;width:1px;height:19px;background:#a0a0a0"></div>
<div style="left:-78.00px;top:145.34px;width:600px;text-align:center;font-family:'Liberation Sans',sans-serif;font-size:12px;line-height:12px;height:12px;color:#000;letter-spacing:0.000px;">C</div>
<div style="left:337px;top:140px;width:1px;height:19px;background:#a0a0a0"></div>
<div style="left:-1.00px;top:145.34px;width:600px;text-align:center;font-family:'Liberation Sans',sans-serif;font-size:12px;line-height:12px;height:12px;color:#000;letter-spacing:0.000px;">D</div>
<div style="left:427px;top:140px;width:1px;height:19px;background:#a0a0a0"></div>
<div style="left:82.50px;top:145.34px;width:600px;text-align:center;font-family:'Liberation Sans',sans-serif;font-size:12px;line-height:12px;height:12px;color:#000;letter-spacing:0.000px;">E</div>
<div style="left:517px;top:140px;width:1px;height:19px;background:#a0a0a0"></div>
<div style="left:172.50px;top:145.34px;width:600px;text-align:center;font-family:'Liberation Sans',sans-serif;font-size:12px;line-height:12px;height:12px;color:#000;letter-spacing:0.000px;">F</div>
<div style="left:607px;top:140px;width:1px;height:19px;background:#a0a0a0"></div>
<div style="left:262.50px;top:145.34px;width:600px;text-align:center;font-family:'Liberation Sans',sans-serif;font-size:12px;line-height:12px;height:12px;color:#000;letter-spacing:0.000px;">G</div>
<div style="left:697px;top:140px;width:1px;height:19px;background:#a0a0a0"></div>
<div style="left:352.50px;top:145.34px;width:600px;text-align:center;font-family:'Liberation Sans',sans-serif;font-size:12px;line-height:12px;height:12px;color:#000;letter-spacing:0.000px;">H</div>
<div style="left:787px;top:140px;width:1px;height:19px;background:#a0a0a0"></div>
<div style="left:442.50px;top:145.34px;width:600px;text-align:center;font-family:'Liberation Sans',sans-serif;font-size:12px;line-height:12px;height:12px;color:#000;letter-spacing:0.000px;">I</div>
<div style="left:877px;top:140px;width:1px;height:19px;background:#a0a0a0"></div>
<div style="left:532.50px;top:145.34px;width:600px;text-align:center;font-family:'Liberation Sans',sans-serif;font-size:12px;line-height:12px;height:12px;color:#000;letter-spacing:0.000px;">J</div>
<div style="left:954px;top:140px;width:1px;height:19px;background:#a0a0a0"></div>
<div style="left:616.00px;top:145.34px;width:600px;text-align:center;font-family:'Liberation Sans',sans-serif;font-size:12px;line-height:12px;height:12px;color:#000;letter-spacing:0.000px;">K</div>
<div style="left:1019px;top:140px;width:1px;height:19px;background:#a0a0a0"></div>
<div style="left:687.00px;top:145.34px;width:600px;text-align:center;font-family:'Liberation Sans',sans-serif;font-size:12px;line-height:12px;height:12px;color:#000;letter-spacing:0.000px;">L</div>
<div style="left:1100px;top:140px;width:1px;height:19px;background:#a0a0a0"></div>
<div style="left:760.00px;top:145.34px;width:600px;text-align:center;font-family:'Liberation Sans',sans-serif;font-size:12px;line-height:12px;height:12px;color:#000;letter-spacing:0.000px;">M</div>
<div style="left:1181px;top:140px;width:1px;height:19px;background:#a0a0a0"></div>
<div style="left:841.00px;top:145.34px;width:600px;text-align:center;font-family:'Liberation Sans',sans-serif;font-size:12px;line-height:12px;height:12px;color:#000;letter-spacing:0.000px;">N</div>
<div style="left:1181px;top:140px;width:1px;height:19px;background:#a0a0a0"></div>
<div style="left:2px;top:176px;width:32px;height:1px;background:#808080"></div>
<div style="left:2px;top:161px;width:32px;height:16px;line-height:16px;color:#000;font-size:12px;text-align:center;">1</div>
<div style="left:2px;top:185px;width:32px;height:1px;background:#808080"></div>
<div style="left:2px;top:178px;width:32px;height:8px;line-height:8px;color:#000;font-size:12px;text-align:center;">2</div>
<div style="left:2px;top:202px;width:32px;height:1px;background:#808080"></div>
<div style="left:2px;top:187px;width:32px;height:16px;line-height:16px;color:#000;font-size:12px;text-align:center;">3</div>
<div style="left:2px;top:220px;width:32px;height:1px;background:#808080"></div>
<div style="left:2px;top:204px;width:32px;height:17px;line-height:17px;color:#000;font-size:12px;text-align:center;">4</div>
<div style="left:2px;top:233px;width:32px;height:1px;background:#808080"></div>
<div style="left:2px;top:222px;width:32px;height:12px;line-height:12px;color:#000;font-size:12px;text-align:center;">5</div>
<div style="left:2px;top:253px;width:32px;height:1px;background:#808080"></div>
<div style="left:2px;top:235px;width:32px;height:19px;line-height:19px;color:#000;font-size:12px;text-align:center;">6</div>
<div style="left:2px;top:271px;width:32px;height:1px;background:#808080"></div>
<div style="left:2px;top:255px;width:32px;height:17px;line-height:17px;color:#000;font-size:12px;text-align:center;">7</div>
<div style="left:2px;top:289px;width:32px;height:1px;background:#808080"></div>
<div style="left:2px;top:273px;width:32px;height:17px;line-height:17px;color:#000;font-size:12px;text-align:center;">8</div>
<div style="left:2px;top:290px;width:32px;height:19px;background:#3399ff"></div>
<div style="left:2px;top:309px;width:32px;height:1px;background:#808080"></div>
<div style="left:2px;top:291px;width:32px;height:19px;line-height:19px;color:#fff;font-size:12px;text-align:center;font-weight:bold;">9</div>
<div style="left:2px;top:329px;width:32px;height:1px;background:#808080"></div>
<div style="left:2px;top:311px;width:32px;height:19px;line-height:19px;color:#000;font-size:12px;text-align:center;">10</div>
<div style="left:2px;top:349px;width:32px;height:1px;background:#808080"></div>
<div style="left:2px;top:331px;width:32px;height:19px;line-height:19px;color:#000;font-size:12px;text-align:center;">11</div>
<div style="left:2px;top:369px;width:32px;height:1px;background:#808080"></div>
<div style="left:2px;top:351px;width:32px;height:19px;line-height:19px;color:#000;font-size:12px;text-align:center;">12</div>
<div style="left:2px;top:389px;width:32px;height:1px;background:#808080"></div>
<div style="left:2px;top:371px;width:32px;height:19px;line-height:19px;color:#000;font-size:12px;text-align:center;">13</div>
<div style="left:2px;top:409px;width:32px;height:1px;background:#808080"></div>
<div style="left:2px;top:391px;width:32px;height:19px;line-height:19px;color:#000;font-size:12px;text-align:center;">14</div>
<div style="left:2px;top:429px;width:32px;height:1px;background:#808080"></div>
<div style="left:2px;top:411px;width:32px;height:19px;line-height:19px;color:#000;font-size:12px;text-align:center;">15</div>
<div style="left:2px;top:449px;width:32px;height:1px;background:#808080"></div>
<div style="left:2px;top:431px;width:32px;height:19px;line-height:19px;color:#000;font-size:12px;text-align:center;">16</div>
<div style="left:2px;top:469px;width:32px;height:1px;background:#808080"></div>
<div style="left:2px;top:451px;width:32px;height:19px;line-height:19px;color:#000;font-size:12px;text-align:center;">17</div>
<div style="left:2px;top:489px;width:32px;height:1px;background:#808080"></div>
<div style="left:2px;top:471px;width:32px;height:19px;line-height:19px;color:#000;font-size:12px;text-align:center;">18</div>
<div style="left:2px;top:509px;width:32px;height:1px;background:#808080"></div>
<div style="left:2px;top:491px;width:32px;height:19px;line-height:19px;color:#000;font-size:12px;text-align:center;">19</div>
<div style="left:2px;top:529px;width:32px;height:1px;background:#808080"></div>
<div style="left:2px;top:511px;width:32px;height:19px;line-height:19px;color:#000;font-size:12px;text-align:center;">20</div>
<div style="left:2px;top:549px;width:32px;height:1px;background:#808080"></div>
<div style="left:2px;top:531px;width:32px;height:19px;line-height:19px;color:#000;font-size:12px;text-align:center;">21</div>
<div style="left:2px;top:569px;width:32px;height:1px;background:#808080"></div>
<div style="left:2px;top:551px;width:32px;height:19px;line-height:19px;color:#000;font-size:12px;text-align:center;">22</div>
<div style="left:2px;top:589px;width:32px;height:1px;background:#808080"></div>
<div style="left:2px;top:571px;width:32px;height:19px;line-height:19px;color:#000;font-size:12px;text-align:center;">23</div>
<div style="left:2px;top:609px;width:32px;height:1px;background:#808080"></div>
<div style="left:2px;top:591px;width:32px;height:19px;line-height:19px;color:#000;font-size:12px;text-align:center;">24</div>
<div style="left:2px;top:629px;width:32px;height:1px;background:#808080"></div>
<div style="left:2px;top:611px;width:32px;height:19px;line-height:19px;color:#000;font-size:12px;text-align:center;">25</div>
<div style="left:2px;top:649px;width:32px;height:1px;background:#808080"></div>
<div style="left:2px;top:631px;width:32px;height:19px;line-height:19px;color:#000;font-size:12px;text-align:center;">26</div>
<div style="left:2px;top:669px;width:32px;height:1px;background:#808080"></div>
<div style="left:2px;top:651px;width:32px;height:19px;line-height:19px;color:#000;font-size:12px;text-align:center;">27</div>
<div style="left:2px;top:689px;width:32px;height:1px;background:#808080"></div>
<div style="left:2px;top:671px;width:32px;height:19px;line-height:19px;color:#000;font-size:12px;text-align:center;">28</div>
<div style="left:2px;top:709px;width:32px;height:1px;background:#808080"></div>
<div style="left:2px;top:691px;width:32px;height:19px;line-height:19px;color:#000;font-size:12px;text-align:center;">29</div>
<div style="left:2px;top:729px;width:32px;height:1px;background:#808080"></div>
<div style="left:2px;top:711px;width:32px;height:19px;line-height:19px;color:#000;font-size:12px;text-align:center;">30</div>
<div style="left:2px;top:749px;width:32px;height:1px;background:#808080"></div>
<div style="left:2px;top:731px;width:32px;height:19px;line-height:19px;color:#000;font-size:12px;text-align:center;">31</div>
<div style="left:2px;top:769px;width:32px;height:1px;background:#808080"></div>
<div style="left:2px;top:751px;width:32px;height:19px;line-height:19px;color:#000;font-size:12px;text-align:center;">32</div>
<div style="left:2px;top:789px;width:32px;height:1px;background:#808080"></div>
<div style="left:2px;top:771px;width:32px;height:19px;line-height:19px;color:#000;font-size:12px;text-align:center;">33</div>
<div style="left:2px;top:809px;width:32px;height:1px;background:#808080"></div>
<div style="left:2px;top:791px;width:32px;height:19px;line-height:19px;color:#000;font-size:12px;text-align:center;">34</div>
<div style="left:2px;top:811px;width:32px;height:19px;line-height:19px;color:#000;font-size:12px;text-align:center;">35</div>
<div style="left:35px;top:203px;width:985px;height:17px;background:#e6e6ff"></div>
<div style="left:428px;top:234px;width:90px;height:38px;background:#9999ff"></div>
<div style="left:518px;top:234px;width:90px;height:38px;background:#99ffcc"></div>
<div style="left:608px;top:234px;width:90px;height:38px;background:#cccccc"></div>
<div style="left:955px;top:234px;width:65px;height:38px;background:#ccffcc"></div>
<div style="left:428px;top:272px;width:90px;height:548px;background:#9999ff"></div>
<div style="left:518px;top:272px;width:90px;height:548px;background:#99ffcc"></div>
<div style="left:608px;top:272px;width:90px;height:548px;background:#cccccc"></div>
<div style="left:955px;top:272px;width:65px;height:548px;background:#ccffcc"></div>
<div style="left:35px;top:185px;width:985px;height:1px;background:#000"></div>
<div style="left:35px;top:202px;width:985px;height:1px;background:#000"></div>
<div style="left:1019px;top:185px;width:1px;height:36px;background:#000"></div>
<div style="left:35px;top:220px;width:985px;height:1px;background:#000"></div>
<div style="left:183px;top:203px;width:1px;height:18px;background:#000"></div>
<div style="left:337px;top:203px;width:1px;height:18px;background:#000"></div>
<div style="left:427px;top:203px;width:1px;height:18px;background:#000"></div>
<div style="left:517px;top:203px;width:1px;height:18px;background:#000"></div>
<div style="left:607px;top:203px;width:1px;height:18px;background:#000"></div>
<div style="left:697px;top:203px;width:1px;height:18px;background:#000"></div>
<div style="left:787px;top:203px;width:1px;height:18px;background:#000"></div>
<div style="left:877px;top:203px;width:1px;height:18px;background:#000"></div>
<div style="left:954px;top:203px;width:1px;height:18px;background:#000"></div>
<div style="left:35px;top:232px;width:986px;height:1px;background:#000"></div>
<div style="left:35px;top:235px;width:71px;height:34px;border:1px solid #000;box-sizing:border-box"></div>
<div style="left:107px;top:235px;width:76px;height:34px;border:1px solid #000;box-sizing:border-box"></div>
<div style="left:184px;top:235px;width:76px;height:34px;border:1px solid #000;box-sizing:border-box"></div>
<div style="left:261px;top:235px;width:76px;height:34px;border:1px solid #000;box-sizing:border-box"></div>
<div style="left:338px;top:235px;width:89px;height:34px;border:1px solid #000;box-sizing:border-box"></div>
<div style="left:428px;top:235px;width:89px;height:34px;border:1px solid #000;box-sizing:border-box"></div>
<div style="left:518px;top:235px;width:89px;height:34px;border:1px solid #000;box-sizing:border-box"></div>
<div style="left:608px;top:235px;width:89px;height:34px;border:1px solid #000;box-sizing:border-box"></div>
<div style="left:698px;top:235px;width:89px;height:34px;border:1px solid #000;box-sizing:border-box"></div>
<div style="left:788px;top:235px;width:166px;height:18px;border:1px solid #000;box-sizing:border-box"></div>
<div style="left:788px;top:255px;width:89px;height:14px;border:1px solid #000;box-sizing:border-box"></div>
<div style="left:878px;top:255px;width:76px;height:14px;border:1px solid #000;box-sizing:border-box"></div>
<div style="left:955px;top:235px;width:64px;height:34px;border:1px solid #000;box-sizing:border-box"></div>
<div style="left:954px;top:232px;width:67px;height:40px;border:1px solid #000;border-left:none;box-sizing:border-box"></div>
<div style="left:35px;top:271px;width:985px;height:1px;background:#000"></div>
<div style="left:35px;top:289px;width:985px;height:1px;background:#000"></div>
<div style="left:35px;top:309px;width:985px;height:1px;background:#000"></div>
<div style="left:35px;top:329px;width:985px;height:1px;background:#000"></div>
<div style="left:35px;top:349px;width:985px;height:1px;background:#000"></div>
<div style="left:35px;top:369px;width:985px;height:1px;background:#000"></div>
<div style="left:35px;top:389px;width:985px;height:1px;background:#000"></div>
<div style="left:35px;top:409px;width:985px;height:1px;background:#000"></div>
<div style="left:35px;top:429px;width:985px;height:1px;background:#000"></div>
<div style="left:35px;top:449px;width:985px;height:1px;background:#000"></div>
<div style="left:35px;top:469px;width:985px;height:1px;background:#000"></div>
<div style="left:35px;top:489px;width:985px;height:1px;background:#000"></div>
<div style="left:35px;top:509px;width:985px;height:1px;background:#000"></div>
<div style="left:35px;top:529px;width:985px;height:1px;background:#000"></div>
<div style="left:35px;top:549px;width:985px;height:1px;background:#000"></div>
<div style="left:35px;top:569px;width:985px;height:1px;background:#000"></div>
<div style="left:35px;top:589px;width:985px;height:1px;background:#000"></div>
<div style="left:35px;top:609px;width:985px;height:1px;background:#000"></div>
<div style="left:35px;top:629px;width:985px;height:1px;background:#000"></div>
<div style="left:35px;top:649px;width:985px;height:1px;background:#000"></div>
<div style="left:35px;top:669px;width:985px;height:1px;background:#000"></div>
<div style="left:35px;top:689px;width:985px;height:1px;background:#000"></div>
<div style="left:35px;top:709px;width:985px;height:1px;background:#000"></div>
<div style="left:35px;top:729px;width:985px;height:1px;background:#000"></div>
<div style="left:35px;top:749px;width:985px;height:1px;background:#000"></div>
<div style="left:35px;top:769px;width:985px;height:1px;background:#000"></div>
<div style="left:35px;top:789px;width:985px;height:1px;background:#000"></div>
<div style="left:35px;top:809px;width:985px;height:1px;background:#000"></div>
<div style="left:106px;top:272px;width:1px;height:549px;background:#000"></div>
<div style="left:183px;top:272px;width:1px;height:549px;background:#000"></div>
<div style="left:260px;top:272px;width:1px;height:549px;background:#000"></div>
<div style="left:337px;top:272px;width:1px;height:549px;background:#000"></div>
<div style="left:427px;top:272px;width:1px;height:549px;background:#000"></div>
<div style="left:517px;top:272px;width:1px;height:549px;background:#000"></div>
<div style="left:607px;top:272px;width:1px;height:549px;background:#000"></div>
<div style="left:697px;top:272px;width:1px;height:549px;background:#000"></div>
<div style="left:787px;top:272px;width:1px;height:549px;background:#000"></div>
<div style="left:877px;top:272px;width:1px;height:549px;background:#000"></div>
<div style="left:954px;top:272px;width:1px;height:549px;background:#000"></div>
<div style="left:1019px;top:272px;width:1px;height:549px;background:#000"></div>
<div style="left:55.00px;top:161.57px;font-family:'Liberation Sans',sans-serif;font-size:13.5px;line-height:13.5px;height:13.5px;color:#ff3333;letter-spacing:-0.502px;font-weight:bold;font-style:italic;">Jahr:</div>
<div style="left:131.72px;top:161.57px;font-family:'Liberation Sans',sans-serif;font-size:13.5px;line-height:13.5px;height:13.5px;color:#ff3333;letter-spacing:-1.260px;font-weight:bold;font-style:italic;">2017</div>
<div style="left:200.50px;top:161.57px;font-family:'Liberation Sans',sans-serif;font-size:13.5px;line-height:13.5px;height:13.5px;color:#000;letter-spacing:-0.348px;font-weight:bold;font-style:italic;">Monat:</div>
<div style="left:295.22px;top:161.57px;font-family:'Liberation Sans',sans-serif;font-size:13.5px;line-height:13.5px;height:13.5px;color:#000;letter-spacing:0.000px;font-weight:bold;font-style:italic;">2</div>
<div style="left:457.61px;top:158.88px;width:133.77px;transform:scaleX(1.0320);transform-origin:65.89px 0;font-family:'Liberation Sans',sans-serif;font-size:15.5px;line-height:15.5px;height:15.5px;color:#000;font-weight:bold;">Stundennachweis</div>
<div style="left:478.06px;top:186.44px;width:161.87px;transform:scaleX(0.9695);transform-origin:79.94px 0;font-family:'Liberation Serif',serif;font-size:15px;line-height:15px;height:15px;color:#0000ff;font-weight:bold;">Gesammte Stunden/Tage</div>
<div style="left:36.00px;top:205.57px;font-family:'Liberation Sans',sans-serif;font-size:13.5px;line-height:13.5px;height:13.5px;color:#669900;letter-spacing:-0.590px;font-weight:bold;">ZA Konto:</div>
<div style="left:117.44px;top:204.98px;width:38.32px;transform:scaleX(0.8672);transform-origin:18.16px 0;font-family:'Liberation Sans',sans-serif;font-size:14.2px;line-height:14.2px;height:14.2px;color:#669900;font-weight:bold;">00:00</div>
<div style="left:363.84px;top:204.98px;width:38.32px;transform:scaleX(0.8672);transform-origin:18.16px 0;font-family:'Liberation Sans',sans-serif;font-size:14.2px;line-height:14.2px;height:14.2px;color:#000;font-weight:bold;">00:00</div>
<div style="left:453.59px;top:204.98px;width:38.32px;transform:scaleX(0.8672);transform-origin:18.16px 0;font-family:'Liberation Sans',sans-serif;font-size:14.2px;line-height:14.2px;height:14.2px;color:#000;font-weight:bold;">00:00</div>
<div style="left:543.59px;top:204.98px;width:38.32px;transform:scaleX(0.8672);transform-origin:18.16px 0;font-family:'Liberation Sans',sans-serif;font-size:14.2px;line-height:14.2px;height:14.2px;color:#000;font-weight:bold;">00:00</div>
<div style="left:633.54px;top:204.98px;width:38.32px;transform:scaleX(0.8672);transform-origin:18.16px 0;font-family:'Liberation Sans',sans-serif;font-size:14.2px;line-height:14.2px;height:14.2px;color:#ff3333;font-weight:bold;">00:00</div>
<div style="left:723.84px;top:204.98px;width:38.32px;transform:scaleX(0.8672);transform-origin:18.16px 0;font-family:'Liberation Sans',sans-serif;font-size:14.2px;line-height:14.2px;height:14.2px;color:#0000ff;font-weight:bold;">00:00</div>
<div style="left:813.84px;top:204.98px;width:38.32px;transform:scaleX(0.8672);transform-origin:18.16px 0;font-family:'Liberation Sans',sans-serif;font-size:14.2px;line-height:14.2px;height:14.2px;color:#000;font-weight:bold;">00:00</div>
<div style="left:911.25px;top:204.98px;width:9.90px;transform:scaleX(0.6966);transform-origin:3.95px 0;font-family:'Liberation Sans',sans-serif;font-size:14.2px;line-height:14.2px;height:14.2px;color:#000;font-weight:bold;">0</div>
<div style="left:180px;top:203px;width:3px;height:3px;background:#ff0000"></div>
<div style="left:424px;top:203px;width:3px;height:3px;background:#ff0000"></div>
<div style="left:604px;top:203px;width:3px;height:3px;background:#ff0000"></div>
<div style="left:784px;top:203px;width:3px;height:3px;background:#ff0000"></div>
<div style="left:48.41px;top:237.98px;width:46.18px;transform:scaleX(0.8964);transform-origin:22.09px 0;font-family:'Liberation Sans',sans-serif;font-size:14.2px;line-height:14.2px;height:14.2px;color:#000;font-weight:bold;">Datum</div>
<div style="left:114.13px;top:237.98px;width:62.75px;transform:scaleX(0.9218);transform-origin:30.37px 0;font-family:'Liberation Sans',sans-serif;font-size:14.2px;line-height:14.2px;height:14.2px;color:#000;font-weight:bold;">Kommen</div>
<div style="left:200.58px;top:237.98px;width:43.84px;transform:scaleX(0.9200);transform-origin:20.92px 0;font-family:'Liberation Sans',sans-serif;font-size:14.2px;line-height:14.2px;height:14.2px;color:#000;font-weight:bold;">Pause</div>
<div style="left:276.40px;top:237.98px;width:46.19px;transform:scaleX(0.9200);transform-origin:22.10px 0;font-family:'Liberation Sans',sans-serif;font-size:14.2px;line-height:14.2px;height:14.2px;color:#000;font-weight:bold;">Gehen</div>
<div style="left:349.22px;top:237.98px;width:69.06px;transform:scaleX(0.9170);transform-origin:33.53px 0;font-family:'Liberation Sans',sans-serif;font-size:14.2px;line-height:14.2px;height:14.2px;color:#000;font-weight:bold;">Soll/Norm</div>
<div style="left:371.56px;top:253.98px;width:24.87px;transform:scaleX(0.8743);transform-origin:11.44px 0;font-family:'Liberation Sans',sans-serif;font-size:14.2px;line-height:14.2px;height:14.2px;color:#000;font-weight:bold;">Std</div>
<div style="left:435.81px;top:237.98px;width:69.88px;transform:scaleX(0.9282);transform-origin:33.94px 0;font-family:'Liberation Sans',sans-serif;font-size:14.2px;line-height:14.2px;height:14.2px;color:#fff;font-weight:bold;">Geleistete</div>
<div style="left:460.56px;top:253.98px;width:24.87px;transform:scaleX(0.8743);transform-origin:11.44px 0;font-family:'Liberation Sans',sans-serif;font-size:14.2px;line-height:14.2px;height:14.2px;color:#fff;font-weight:bold;">Std</div>
<div style="left:517.96px;top:237.98px;width:89.57px;transform:scaleX(0.9021);transform-origin:43.79px 0;font-family:'Liberation Sans',sans-serif;font-size:14.2px;line-height:14.2px;height:14.2px;color:#000;font-weight:bold;">Überstunden</div>
<div style="left:609.70px;top:237.98px;width:86.41px;transform:scaleX(0.9123);transform-origin:42.20px 0;font-family:'Liberation Sans',sans-serif;font-size:14.2px;line-height:14.2px;height:14.2px;color:#ff3333;font-weight:bold;">Fehlstunden</div>
<div style="left:713.01px;top:237.98px;width:61.19px;transform:scaleX(0.9546);transform-origin:29.59px 0;font-family:'Liberation Sans',sans-serif;font-size:14.2px;line-height:14.2px;height:14.2px;color:#0000ff;font-weight:bold;">Gezahlte</div>
<div style="left:698.31px;top:253.98px;width:89.57px;transform:scaleX(0.9021);transform-origin:43.79px 0;font-family:'Liberation Sans',sans-serif;font-size:14.2px;line-height:14.2px;height:14.2px;color:#0000ff;font-weight:bold;">Überstunden</div>
<div style="left:850.31px;top:237.98px;width:46.97px;transform:scaleX(0.9117);transform-origin:22.49px 0;font-family:'Liberation Sans',sans-serif;font-size:14.2px;line-height:14.2px;height:14.2px;color:#000;font-weight:bold;">Urlaub</div>
<div style="left:820.96px;top:253.98px;width:24.87px;transform:scaleX(0.8306);transform-origin:11.44px 0;font-family:'Liberation Sans',sans-serif;font-size:14.2px;line-height:14.2px;height:14.2px;color:#000;font-weight:bold;">Std</div>
<div style="left:903.65px;top:253.98px;width:26.19px;transform:scaleX(0.9381);transform-origin:12.10px 0;font-family:'Liberation Sans',sans-serif;font-size:14.2px;line-height:14.2px;height:14.2px;color:#000;font-weight:bold;">Tag</div>
<div style="left:965.20px;top:237.98px;width:45.40px;transform:scaleX(0.8526);transform-origin:21.70px 0;font-family:'Liberation Sans',sans-serif;font-size:14.2px;line-height:14.2px;height:14.2px;color:#ff3333;font-weight:bold;">Status</div>
<div style="left:52.14px;top:273.98px;width:37.53px;transform:scaleX(0.8937);transform-origin:17.76px 0;font-family:'Liberation Sans',sans-serif;font-size:14.2px;line-height:14.2px;height:14.2px;color:#000;font-weight:bold;">01.02</div>
<div style="left:453.84px;top:273.98px;width:38.32px;transform:scaleX(0.8672);transform-origin:18.16px 0;font-family:'Liberation Sans',sans-serif;font-size:14.2px;line-height:14.2px;height:14.2px;color:#ffffff;font-weight:bold;">00:00</div>
<div style="left:543.59px;top:273.98px;width:38.32px;transform:scaleX(0.8672);transform-origin:18.16px 0;font-family:'Liberation Sans',sans-serif;font-size:14.2px;line-height:14.2px;height:14.2px;color:#000;font-weight:bold;">00:00</div>
<div style="left:633.59px;top:273.98px;width:38.32px;transform:scaleX(0.8672);transform-origin:18.16px 0;font-family:'Liberation Sans',sans-serif;font-size:14.2px;line-height:14.2px;height:14.2px;color:#ff3333;font-weight:bold;">00:00</div>
<div style="left:45.93px;top:293.98px;width:50.94px;transform:scaleX(0.8632);transform-origin:24.47px 0;font-family:'Liberation Sans',sans-serif;font-size:14.2px;line-height:14.2px;height:14.2px;color:#000;font-weight:bold;">Err:504</div>
<div style="left:453.84px;top:293.98px;width:38.32px;transform:scaleX(0.8672);transform-origin:18.16px 0;font-family:'Liberation Sans',sans-serif;font-size:14.2px;line-height:14.2px;height:14.2px;color:#ffffff;font-weight:bold;">00:00</div>
<div style="left:543.59px;top:293.98px;width:38.32px;transform:scaleX(0.8672);transform-origin:18.16px 0;font-family:'Liberation Sans',sans-serif;font-size:14.2px;line-height:14.2px;height:14.2px;color:#000;font-weight:bold;">00:00</div>
<div style="left:633.59px;top:293.98px;width:38.32px;transform:scaleX(0.8672);transform-origin:18.16px 0;font-family:'Liberation Sans',sans-serif;font-size:14.2px;line-height:14.2px;height:14.2px;color:#ff3333;font-weight:bold;">00:00</div>
<div style="left:45.93px;top:313.98px;width:50.94px;transform:scaleX(0.8632);transform-origin:24.47px 0;font-family:'Liberation Sans',sans-serif;font-size:14.2px;line-height:14.2px;height:14.2px;color:#000;font-weight:bold;">Err:504</div>
<div style="left:453.84px;top:313.98px;width:38.32px;transform:scaleX(0.8672);transform-origin:18.16px 0;font-family:'Liberation Sans',sans-serif;font-size:14.2px;line-height:14.2px;height:14.2px;color:#ffffff;font-weight:bold;">00:00</div>
<div style="left:543.59px;top:313.98px;width:38.32px;transform:scaleX(0.8672);transform-origin:18.16px 0;font-family:'Liberation Sans',sans-serif;font-size:14.2px;line-height:14.2px;height:14.2px;color:#000;font-weight:bold;">00:00</div>
<div style="left:633.59px;top:313.98px;width:38.32px;transform:scaleX(0.8672);transform-origin:18.16px 0;font-family:'Liberation Sans',sans-serif;font-size:14.2px;line-height:14.2px;height:14.2px;color:#ff3333;font-weight:bold;">00:00</div>
<div style="left:45.93px;top:333.98px;width:50.94px;transform:scaleX(0.8632);transform-origin:24.47px 0;font-family:'Liberation Sans',sans-serif;font-size:14.2px;line-height:14.2px;height:14.2px;color:#000;font-weight:bold;">Err:504</div>
<div style="left:453.84px;top:333.98px;width:38.32px;transform:scaleX(0.8672);transform-origin:18.16px 0;font-family:'Liberation Sans',sans-serif;font-size:14.2px;line-height:14.2px;height:14.2px;color:#ffffff;font-weight:bold;">00:00</div>
<div style="left:543.59px;top:333.98px;width:38.32px;transform:scaleX(0.8672);transform-origin:18.16px 0;font-family:'Liberation Sans',sans-serif;font-size:14.2px;line-height:14.2px;height:14.2px;color:#000;font-weight:bold;">00:00</div>
<div style="left:633.59px;top:333.98px;width:38.32px;transform:scaleX(0.8672);transform-origin:18.16px 0;font-family:'Liberation Sans',sans-serif;font-size:14.2px;line-height:14.2px;height:14.2px;color:#ff3333;font-weight:bold;">00:00</div>
<div style="left:45.93px;top:353.98px;width:50.94px;transform:scaleX(0.8632);transform-origin:24.47px 0;font-family:'Liberation Sans',sans-serif;font-size:14.2px;line-height:14.2px;height:14.2px;color:#000;font-weight:bold;">Err:504</div>
<div style="left:453.84px;top:353.98px;width:38.32px;transform:scaleX(0.8672);transform-origin:18.16px 0;font-family:'Liberation Sans',sans-serif;font-size:14.2px;line-height:14.2px;height:14.2px;color:#ffffff;font-weight:bold;">00:00</div>
<div style="left:543.59px;top:353.98px;width:38.32px;transform:scaleX(0.8672);transform-origin:18.16px 0;font-family:'Liberation Sans',sans-serif;font-size:14.2px;line-height:14.2px;height:14.2px;color:#000;font-weight:bold;">00:00</div>
<div style="left:633.59px;top:353.98px;width:38.32px;transform:scaleX(0.8672);transform-origin:18.16px 0;font-family:'Liberation Sans',sans-serif;font-size:14.2px;line-height:14.2px;height:14.2px;color:#ff3333;font-weight:bold;">00:00</div>
<div style="left:45.93px;top:373.98px;width:50.94px;transform:scaleX(0.8632);transform-origin:24.47px 0;font-family:'Liberation Sans',sans-serif;font-size:14.2px;line-height:14.2px;height:14.2px;color:#000;font-weight:bold;">Err:504</div>
<div style="left:453.84px;top:373.98px;width:38.32px;transform:scaleX(0.8672);transform-origin:18.16px 0;font-family:'Liberation Sans',sans-serif;font-size:14.2px;line-height:14.2px;height:14.2px;color:#ffffff;font-weight:bold;">00:00</div>
<div style="left:543.59px;top:373.98px;width:38.32px;transform:scaleX(0.8672);transform-origin:18.16px 0;font-family:'Liberation Sans',sans-serif;font-size:14.2px;line-height:14.2px;height:14.2px;color:#000;font-weight:bold;">00:00</div>
<div style="left:633.59px;top:373.98px;width:38.32px;transform:scaleX(0.8672);transform-origin:18.16px 0;font-family:'Liberation Sans',sans-serif;font-size:14.2px;line-height:14.2px;height:14.2px;color:#ff3333;font-weight:bold;">00:00</div>
<div style="left:45.93px;top:393.98px;width:50.94px;transform:scaleX(0.8632);transform-origin:24.47px 0;font-family:'Liberation Sans',sans-serif;font-size:14.2px;line-height:14.2px;height:14.2px;color:#000;font-weight:bold;">Err:504</div>
<div style="left:453.84px;top:393.98px;width:38.32px;transform:scaleX(0.8672);transform-origin:18.16px 0;font-family:'Liberation Sans',sans-serif;font-size:14.2px;line-height:14.2px;height:14.2px;color:#ffffff;font-weight:bold;">00:00</div>
<div style="left:543.59px;top:393.98px;width:38.32px;transform:scaleX(0.8672);transform-origin:18.16px 0;font-family:'Liberation Sans',sans-serif;font-size:14.2px;line-height:14.2px;height:14.2px;color:#000;font-weight:bold;">00:00</div>
<div style="left:633.59px;top:393.98px;width:38.32px;transform:scaleX(0.8672);transform-origin:18.16px 0;font-family:'Liberation Sans',sans-serif;font-size:14.2px;line-height:14.2px;height:14.2px;color:#ff3333;font-weight:bold;">00:00</div>
<div style="left:45.93px;top:413.98px;width:50.94px;transform:scaleX(0.8632);transform-origin:24.47px 0;font-family:'Liberation Sans',sans-serif;font-size:14.2px;line-height:14.2px;height:14.2px;color:#000;font-weight:bold;">Err:504</div>
<div style="left:453.84px;top:413.98px;width:38.32px;transform:scaleX(0.8672);transform-origin:18.16px 0;font-family:'Liberation Sans',sans-serif;font-size:14.2px;line-height:14.2px;height:14.2px;color:#ffffff;font-weight:bold;">00:00</div>
<div style="left:543.59px;top:413.98px;width:38.32px;transform:scaleX(0.8672);transform-origin:18.16px 0;font-family:'Liberation Sans',sans-serif;font-size:14.2px;line-height:14.2px;height:14.2px;color:#000;font-weight:bold;">00:00</div>
<div style="left:633.59px;top:413.98px;width:38.32px;transform:scaleX(0.8672);transform-origin:18.16px 0;font-family:'Liberation Sans',sans-serif;font-size:14.2px;line-height:14.2px;height:14.2px;color:#ff3333;font-weight:bold;">00:00</div>
<div style="left:45.93px;top:433.98px;width:50.94px;transform:scaleX(0.8632);transform-origin:24.47px 0;font-family:'Liberation Sans',sans-serif;font-size:14.2px;line-height:14.2px;height:14.2px;color:#000;font-weight:bold;">Err:504</div>
<div style="left:453.84px;top:433.98px;width:38.32px;transform:scaleX(0.8672);transform-origin:18.16px 0;font-family:'Liberation Sans',sans-serif;font-size:14.2px;line-height:14.2px;height:14.2px;color:#ffffff;font-weight:bold;">00:00</div>
<div style="left:543.59px;top:433.98px;width:38.32px;transform:scaleX(0.8672);transform-origin:18.16px 0;font-family:'Liberation Sans',sans-serif;font-size:14.2px;line-height:14.2px;height:14.2px;color:#000;font-weight:bold;">00:00</div>
<div style="left:633.59px;top:433.98px;width:38.32px;transform:scaleX(0.8672);transform-origin:18.16px 0;font-family:'Liberation Sans',sans-serif;font-size:14.2px;line-height:14.2px;height:14.2px;color:#ff3333;font-weight:bold;">00:00</div>
<div style="left:45.93px;top:453.98px;width:50.94px;transform:scaleX(0.8632);transform-origin:24.47px 0;font-family:'Liberation Sans',sans-serif;font-size:14.2px;line-height:14.2px;height:14.2px;color:#000;font-weight:bold;">Err:504</div>
<div style="left:453.84px;top:453.98px;width:38.32px;transform:scaleX(0.8672);transform-origin:18.16px 0;font-family:'Liberation Sans',sans-serif;font-size:14.2px;line-height:14.2px;height:14.2px;color:#ffffff;font-weight:bold;">00:00</div>
<div style="left:543.59px;top:453.98px;width:38.32px;transform:scaleX(0.8672);transform-origin:18.16px 0;font-family:'Liberation Sans',sans-serif;font-size:14.2px;line-height:14.2px;height:14.2px;color:#000;font-weight:bold;">00:00</div>
<div style="left:633.59px;top:453.98px;width:38.32px;transform:scaleX(0.8672);transform-origin:18.16px 0;font-family:'Liberation Sans',sans-serif;font-size:14.2px;line-height:14.2px;height:14.2px;color:#ff3333;font-weight:bold;">00:00</div>
<div style="left:45.93px;top:473.98px;width:50.94px;transform:scaleX(0.8632);transform-origin:24.47px 0;font-family:'Liberation Sans',sans-serif;font-size:14.2px;line-height:14.2px;height:14.2px;color:#000;font-weight:bold;">Err:504</div>
<div style="left:453.84px;top:473.98px;width:38.32px;transform:scaleX(0.8672);transform-origin:18.16px 0;font-family:'Liberation Sans',sans-serif;font-size:14.2px;line-height:14.2px;height:14.2px;color:#ffffff;font-weight:bold;">00:00</div>
<div style="left:543.59px;top:473.98px;width:38.32px;transform:scaleX(0.8672);transform-origin:18.16px 0;font-family:'Liberation Sans',sans-serif;font-size:14.2px;line-height:14.2px;height:14.2px;color:#000;font-weight:bold;">00:00</div>
<div style="left:633.59px;top:473.98px;width:38.32px;transform:scaleX(0.8672);transform-origin:18.16px 0;font-family:'Liberation Sans',sans-serif;font-size:14.2px;line-height:14.2px;height:14.2px;color:#ff3333;font-weight:bold;">00:00</div>
<div style="left:45.93px;top:493.98px;width:50.94px;transform:scaleX(0.8632);transform-origin:24.47px 0;font-family:'Liberation Sans',sans-serif;font-size:14.2px;line-height:14.2px;height:14.2px;color:#000;font-weight:bold;">Err:504</div>
<div style="left:453.84px;top:493.98px;width:38.32px;transform:scaleX(0.8672);transform-origin:18.16px 0;font-family:'Liberation Sans',sans-serif;font-size:14.2px;line-height:14.2px;height:14.2px;color:#ffffff;font-weight:bold;">00:00</div>
<div style="left:543.59px;top:493.98px;width:38.32px;transform:scaleX(0.8672);transform-origin:18.16px 0;font-family:'Liberation Sans',sans-serif;font-size:14.2px;line-height:14.2px;height:14.2px;color:#000;font-weight:bold;">00:00</div>
<div style="left:633.59px;top:493.98px;width:38.32px;transform:scaleX(0.8672);transform-origin:18.16px 0;font-family:'Liberation Sans',sans-serif;font-size:14.2px;line-height:14.2px;height:14.2px;color:#ff3333;font-weight:bold;">00:00</div>
<div style="left:45.93px;top:513.98px;width:50.94px;transform:scaleX(0.8632);transform-origin:24.47px 0;font-family:'Liberation Sans',sans-serif;font-size:14.2px;line-height:14.2px;height:14.2px;color:#000;font-weight:bold;">Err:504</div>
<div style="left:453.84px;top:513.98px;width:38.32px;transform:scaleX(0.8672);transform-origin:18.16px 0;font-family:'Liberation Sans',sans-serif;font-size:14.2px;line-height:14.2px;height:14.2px;color:#ffffff;font-weight:bold;">00:00</div>
<div style="left:543.59px;top:513.98px;width:38.32px;transform:scaleX(0.8672);transform-origin:18.16px 0;font-family:'Liberation Sans',sans-serif;font-size:14.2px;line-height:14.2px;height:14.2px;color:#000;font-weight:bold;">00:00</div>
<div style="left:633.59px;top:513.98px;width:38.32px;transform:scaleX(0.8672);transform-origin:18.16px 0;font-family:'Liberation Sans',sans-serif;font-size:14.2px;line-height:14.2px;height:14.2px;color:#ff3333;font-weight:bold;">00:00</div>
<div style="left:45.93px;top:533.98px;width:50.94px;transform:scaleX(0.8632);transform-origin:24.47px 0;font-family:'Liberation Sans',sans-serif;font-size:14.2px;line-height:14.2px;height:14.2px;color:#000;font-weight:bold;">Err:504</div>
<div style="left:453.84px;top:533.98px;width:38.32px;transform:scaleX(0.8672);transform-origin:18.16px 0;font-family:'Liberation Sans',sans-serif;font-size:14.2px;line-height:14.2px;height:14.2px;color:#ffffff;font-weight:bold;">00:00</div>
<div style="left:543.59px;top:533.98px;width:38.32px;transform:scaleX(0.8672);transform-origin:18.16px 0;font-family:'Liberation Sans',sans-serif;font-size:14.2px;line-height:14.2px;height:14.2px;color:#000;font-weight:bold;">00:00</div>
<div style="left:633.59px;top:533.98px;width:38.32px;transform:scaleX(0.8672);transform-origin:18.16px 0;font-family:'Liberation Sans',sans-serif;font-size:14.2px;line-height:14.2px;height:14.2px;color:#ff3333;font-weight:bold;">00:00</div>
<div style="left:45.93px;top:553.98px;width:50.94px;transform:scaleX(0.8632);transform-origin:24.47px 0;font-family:'Liberation Sans',sans-serif;font-size:14.2px;line-height:14.2px;height:14.2px;color:#000;font-weight:bold;">Err:504</div>
<div style="left:453.84px;top:553.98px;width:38.32px;transform:scaleX(0.8672);transform-origin:18.16px 0;font-family:'Liberation Sans',sans-serif;font-size:14.2px;line-height:14.2px;height:14.2px;color:#ffffff;font-weight:bold;">00:00</div>
<div style="left:543.59px;top:553.98px;width:38.32px;transform:scaleX(0.8672);transform-origin:18.16px 0;font-family:'Liberation Sans',sans-serif;font-size:14.2px;line-height:14.2px;height:14.2px;color:#000;font-weight:bold;">00:00</div>
<div style="left:633.59px;top:553.98px;width:38.32px;transform:scaleX(0.8672);transform-origin:18.16px 0;font-family:'Liberation Sans',sans-serif;font-size:14.2px;line-height:14.2px;height:14.2px;color:#ff3333;font-weight:bold;">00:00</div>
<div style="left:45.93px;top:573.98px;width:50.94px;transform:scaleX(0.8632);transform-origin:24.47px 0;font-family:'Liberation Sans',sans-serif;font-size:14.2px;line-height:14.2px;height:14.2px;color:#000;font-weight:bold;">Err:504</div>
<div style="left:453.84px;top:573.98px;width:38.32px;transform:scaleX(0.8672);transform-origin:18.16px 0;font-family:'Liberation Sans',sans-serif;font-size:14.2px;line-height:14.2px;height:14.2px;color:#ffffff;font-weight:bold;">00:00</div>
<div style="left:543.59px;top:573.98px;width:38.32px;transform:scaleX(0.8672);transform-origin:18.16px 0;font-family:'Liberation Sans',sans-serif;font-size:14.2px;line-height:14.2px;height:14.2px;color:#000;font-weight:bold;">00:00</div>
<div style="left:633.59px;top:573.98px;width:38.32px;transform:scaleX(0.8672);transform-origin:18.16px 0;font-family:'Liberation Sans',sans-serif;font-size:14.2px;line-height:14.2px;height:14.2px;color:#ff3333;font-weight:bold;">00:00</div>
<div style="left:45.93px;top:593.98px;width:50.94px;transform:scaleX(0.8632);transform-origin:24.47px 0;font-family:'Liberation Sans',sans-serif;font-size:14.2px;line-height:14.2px;height:14.2px;color:#000;font-weight:bold;">Err:504</div>
<div style="left:453.84px;top:593.98px;width:38.32px;transform:scaleX(0.8672);transform-origin:18.16px 0;font-family:'Liberation Sans',sans-serif;font-size:14.2px;line-height:14.2px;height:14.2px;color:#ffffff;font-weight:bold;">00:00</div>
<div style="left:543.59px;top:593.98px;width:38.32px;transform:scaleX(0.8672);transform-origin:18.16px 0;font-family:'Liberation Sans',sans-serif;font-size:14.2px;line-height:14.2px;height:14.2px;color:#000;font-weight:bold;">00:00</div>
<div style="left:633.59px;top:593.98px;width:38.32px;transform:scaleX(0.8672);transform-origin:18.16px 0;font-family:'Liberation Sans',sans-serif;font-size:14.2px;line-height:14.2px;height:14.2px;color:#ff3333;font-weight:bold;">00:00</div>
<div style="left:45.93px;top:613.98px;width:50.94px;transform:scaleX(0.8632);transform-origin:24.47px 0;font-family:'Liberation Sans',sans-serif;font-size:14.2px;line-height:14.2px;height:14.2px;color:#000;font-weight:bold;">Err:504</div>
<div style="left:453.84px;top:613.98px;width:38.32px;transform:scaleX(0.8672);transform-origin:18.16px 0;font-family:'Liberation Sans',sans-serif;font-size:14.2px;line-height:14.2px;height:14.2px;color:#ffffff;font-weight:bold;">00:00</div>
<div style="left:543.59px;top:613.98px;width:38.32px;transform:scaleX(0.8672);transform-origin:18.16px 0;font-family:'Liberation Sans',sans-serif;font-size:14.2px;line-height:14.2px;height:14.2px;color:#000;font-weight:bold;">00:00</div>
<div style="left:633.59px;top:613.98px;width:38.32px;transform:scaleX(0.8672);transform-origin:18.16px 0;font-family:'Liberation Sans',sans-serif;font-size:14.2px;line-height:14.2px;height:14.2px;color:#ff3333;font-weight:bold;">00:00</div>
<div style="left:45.93px;top:633.98px;width:50.94px;transform:scaleX(0.8632);transform-origin:24.47px 0;font-family:'Liberation Sans',sans-serif;font-size:14.2px;line-height:14.2px;height:14.2px;color:#000;font-weight:bold;">Err:504</div>
<div style="left:453.84px;top:633.98px;width:38.32px;transform:scaleX(0.8672);transform-origin:18.16px 0;font-family:'Liberation Sans',sans-serif;font-size:14.2px;line-height:14.2px;height:14.2px;color:#ffffff;font-weight:bold;">00:00</div>
<div style="left:543.59px;top:633.98px;width:38.32px;transform:scaleX(0.8672);transform-origin:18.16px 0;font-family:'Liberation Sans',sans-serif;font-size:14.2px;line-height:14.2px;height:14.2px;color:#000;font-weight:bold;">00:00</div>
<div style="left:633.59px;top:633.98px;width:38.32px;transform:scaleX(0.8672);transform-origin:18.16px 0;font-family:'Liberation Sans',sans-serif;font-size:14.2px;line-height:14.2px;height:14.2px;color:#ff3333;font-weight:bold;">00:00</div>
<div style="left:45.93px;top:653.98px;width:50.94px;transform:scaleX(0.8632);transform-origin:24.47px 0;font-family:'Liberation Sans',sans-serif;font-size:14.2px;line-height:14.2px;height:14.2px;color:#000;font-weight:bold;">Err:504</div>
<div style="left:453.84px;top:653.98px;width:38.32px;transform:scaleX(0.8672);transform-origin:18.16px 0;font-family:'Liberation Sans',sans-serif;font-size:14.2px;line-height:14.2px;height:14.2px;color:#ffffff;font-weight:bold;">00:00</div>
<div style="left:543.59px;top:653.98px;width:38.32px;transform:scaleX(0.8672);transform-origin:18.16px 0;font-family:'Liberation Sans',sans-serif;font-size:14.2px;line-height:14.2px;height:14.2px;color:#000;font-weight:bold;">00:00</div>
<div style="left:633.59px;top:653.98px;width:38.32px;transform:scaleX(0.8672);transform-origin:18.16px 0;font-family:'Liberation Sans',sans-serif;font-size:14.2px;line-height:14.2px;height:14.2px;color:#ff3333;font-weight:bold;">00:00</div>
<div style="left:45.93px;top:673.98px;width:50.94px;transform:scaleX(0.8632);transform-origin:24.47px 0;font-family:'Liberation Sans',sans-serif;font-size:14.2px;line-height:14.2px;height:14.2px;color:#000;font-weight:bold;">Err:504</div>
<div style="left:453.84px;top:673.98px;width:38.32px;transform:scaleX(0.8672);transform-origin:18.16px 0;font-family:'Liberation Sans',sans-serif;font-size:14.2px;line-height:14.2px;height:14.2px;color:#ffffff;font-weight:bold;">00:00</div>
<div style="left:543.59px;top:673.98px;width:38.32px;transform:scaleX(0.8672);transform-origin:18.16px 0;font-family:'Liberation Sans',sans-serif;font-size:14.2px;line-height:14.2px;height:14.2px;color:#000;font-weight:bold;">00:00</div>
<div style="left:633.59px;top:673.98px;width:38.32px;transform:scaleX(0.8672);transform-origin:18.16px 0;font-family:'Liberation Sans',sans-serif;font-size:14.2px;line-height:14.2px;height:14.2px;color:#ff3333;font-weight:bold;">00:00</div>
<div style="left:45.93px;top:693.98px;width:50.94px;transform:scaleX(0.8632);transform-origin:24.47px 0;font-family:'Liberation Sans',sans-serif;font-size:14.2px;line-height:14.2px;height:14.2px;color:#000;font-weight:bold;">Err:504</div>
<div style="left:453.84px;top:693.98px;width:38.32px;transform:scaleX(0.8672);transform-origin:18.16px 0;font-family:'Liberation Sans',sans-serif;font-size:14.2px;line-height:14.2px;height:14.2px;color:#ffffff;font-weight:bold;">00:00</div>
<div style="left:543.59px;top:693.98px;width:38.32px;transform:scaleX(0.8672);transform-origin:18.16px 0;font-family:'Liberation Sans',sans-serif;font-size:14.2px;line-height:14.2px;height:14.2px;color:#000;font-weight:bold;">00:00</div>
<div style="left:633.59px;top:693.98px;width:38.32px;transform:scaleX(0.8672);transform-origin:18.16px 0;font-family:'Liberation Sans',sans-serif;font-size:14.2px;line-height:14.2px;height:14.2px;color:#ff3333;font-weight:bold;">00:00</div>
<div style="left:45.93px;top:713.98px;width:50.94px;transform:scaleX(0.8632);transform-origin:24.47px 0;font-family:'Liberation Sans',sans-serif;font-size:14.2px;line-height:14.2px;height:14.2px;color:#000;font-weight:bold;">Err:504</div>
<div style="left:453.84px;top:713.98px;width:38.32px;transform:scaleX(0.8672);transform-origin:18.16px 0;font-family:'Liberation Sans',sans-serif;font-size:14.2px;line-height:14.2px;height:14.2px;color:#ffffff;font-weight:bold;">00:00</div>
<div style="left:543.59px;top:713.98px;width:38.32px;transform:scaleX(0.8672);transform-origin:18.16px 0;font-family:'Liberation Sans',sans-serif;font-size:14.2px;line-height:14.2px;height:14.2px;color:#000;font-weight:bold;">00:00</div>
<div style="left:633.59px;top:713.98px;width:38.32px;transform:scaleX(0.8672);transform-origin:18.16px 0;font-family:'Liberation Sans',sans-serif;font-size:14.2px;line-height:14.2px;height:14.2px;color:#ff3333;font-weight:bold;">00:00</div>
<div style="left:45.93px;top:733.98px;width:50.94px;transform:scaleX(0.8632);transform-origin:24.47px 0;font-family:'Liberation Sans',sans-serif;font-size:14.2px;line-height:14.2px;height:14.2px;color:#000;font-weight:bold;">Err:504</div>
<div style="left:453.84px;top:733.98px;width:38.32px;transform:scaleX(0.8672);transform-origin:18.16px 0;font-family:'Liberation Sans',sans-serif;font-size:14.2px;line-height:14.2px;height:14.2px;color:#ffffff;font-weight:bold;">00:00</div>
<div style="left:543.59px;top:733.98px;width:38.32px;transform:scaleX(0.8672);transform-origin:18.16px 0;font-family:'Liberation Sans',sans-serif;font-size:14.2px;line-height:14.2px;height:14.2px;color:#000;font-weight:bold;">00:00</div>
<div style="left:633.59px;top:733.98px;width:38.32px;transform:scaleX(0.8672);transform-origin:18.16px 0;font-family:'Liberation Sans',sans-serif;font-size:14.2px;line-height:14.2px;height:14.2px;color:#ff3333;font-weight:bold;">00:00</div>
<div style="left:45.93px;top:753.98px;width:50.94px;transform:scaleX(0.8632);transform-origin:24.47px 0;font-family:'Liberation Sans',sans-serif;font-size:14.2px;line-height:14.2px;height:14.2px;color:#000;font-weight:bold;">Err:504</div>
<div style="left:453.84px;top:753.98px;width:38.32px;transform:scaleX(0.8672);transform-origin:18.16px 0;font-family:'Liberation Sans',sans-serif;font-size:14.2px;line-height:14.2px;height:14.2px;color:#ffffff;font-weight:bold;">00:00</div>
<div style="left:543.59px;top:753.98px;width:38.32px;transform:scaleX(0.8672);transform-origin:18.16px 0;font-family:'Liberation Sans',sans-serif;font-size:14.2px;line-height:14.2px;height:14.2px;color:#000;font-weight:bold;">00:00</div>
<div style="left:633.59px;top:753.98px;width:38.32px;transform:scaleX(0.8672);transform-origin:18.16px 0;font-family:'Liberation Sans',sans-serif;font-size:14.2px;line-height:14.2px;height:14.2px;color:#ff3333;font-weight:bold;">00:00</div>
<div style="left:45.93px;top:773.98px;width:50.94px;transform:scaleX(0.8632);transform-origin:24.47px 0;font-family:'Liberation Sans',sans-serif;font-size:14.2px;line-height:14.2px;height:14.2px;color:#000;font-weight:bold;">Err:504</div>
<div style="left:453.84px;top:773.98px;width:38.32px;transform:scaleX(0.8672);transform-origin:18.16px 0;font-family:'Liberation Sans',sans-serif;font-size:14.2px;line-height:14.2px;height:14.2px;color:#ffffff;font-weight:bold;">00:00</div>
<div style="left:543.59px;top:773.98px;width:38.32px;transform:scaleX(0.8672);transform-origin:18.16px 0;font-family:'Liberation Sans',sans-serif;font-size:14.2px;line-height:14.2px;height:14.2px;color:#000;font-weight:bold;">00:00</div>
<div style="left:633.59px;top:773.98px;width:38.32px;transform:scaleX(0.8672);transform-origin:18.16px 0;font-family:'Liberation Sans',sans-serif;font-size:14.2px;line-height:14.2px;height:14.2px;color:#ff3333;font-weight:bold;">00:00</div>
<div style="left:45.93px;top:793.98px;width:50.94px;transform:scaleX(0.8632);transform-origin:24.47px 0;font-family:'Liberation Sans',sans-serif;font-size:14.2px;line-height:14.2px;height:14.2px;color:#000;font-weight:bold;">Err:504</div>
<div style="left:453.84px;top:793.98px;width:38.32px;transform:scaleX(0.8672);transform-origin:18.16px 0;font-family:'Liberation Sans',sans-serif;font-size:14.2px;line-height:14.2px;height:14.2px;color:#ffffff;font-weight:bold;">00:00</div>
<div style="left:543.59px;top:793.98px;width:38.32px;transform:scaleX(0.8672);transform-origin:18.16px 0;font-family:'Liberation Sans',sans-serif;font-size:14.2px;line-height:14.2px;height:14.2px;color:#000;font-weight:bold;">00:00</div>
<div style="left:633.59px;top:793.98px;width:38.32px;transform:scaleX(0.8672);transform-origin:18.16px 0;font-family:'Liberation Sans',sans-serif;font-size:14.2px;line-height:14.2px;height:14.2px;color:#ff3333;font-weight:bold;">00:00</div>
<div style="left:45.93px;top:813.98px;width:50.94px;transform:scaleX(0.8632);transform-origin:24.47px 0;font-family:'Liberation Sans',sans-serif;font-size:14.2px;line-height:14.2px;height:14.2px;color:#000;font-weight:bold;">Err:504</div>
<div style="left:453.84px;top:813.98px;width:38.32px;transform:scaleX(0.8672);transform-origin:18.16px 0;font-family:'Liberation Sans',sans-serif;font-size:14.2px;line-height:14.2px;height:14.2px;color:#ffffff;font-weight:bold;">00:00</div>
<div style="left:543.59px;top:813.98px;width:38.32px;transform:scaleX(0.8672);transform-origin:18.16px 0;font-family:'Liberation Sans',sans-serif;font-size:14.2px;line-height:14.2px;height:14.2px;color:#000;font-weight:bold;">00:00</div>
<div style="left:633.59px;top:813.98px;width:38.32px;transform:scaleX(0.8672);transform-origin:18.16px 0;font-family:'Liberation Sans',sans-serif;font-size:14.2px;line-height:14.2px;height:14.2px;color:#ff3333;font-weight:bold;">00:00</div>
<div style="left:35px;top:288px;width:73px;height:23px;border:3px solid #000;border-left-width:2px;box-sizing:border-box"></div>
<div style="left:105px;top:307px;width:4px;height:4px;background:#000"></div>
<div style="left:39px;top:149px;width:290px;height:40px;border:5px solid #ed1c24;box-sizing:border-box"></div>
<div style="left:1192px;top:139px;width:18px;height:681px;background:#f0f0f0"></div>
<div style="left:1192px;top:140px;width:17px;height:3px;background:#000"></div>
<svg style="left:1196px;top:148px;" width="10" height="7" viewBox="0 0 10 7"><path d="M1 5.5 L5 1.5 L9 5.5" stroke="#555" stroke-width="1.8" fill="none"/></svg>
<div style="left:1193px;top:160px;width:15px;height:303px;background:#c8c8c8"></div>
<svg style="left:1196px;top:809px;" width="10" height="7" viewBox="0 0 10 7"><path d="M1 1.5 L5 5.5 L9 1.5" stroke="#555" stroke-width="1.8" fill="none"/></svg>
<div style="left:1210px;top:105px;width:7px;height:733px;background:#f0f0f0"></div>
<div style="left:1216px;top:105px;width:1px;height:733px;background:#8a8a8a"></div>
<svg style="left:1212px;top:455px;" width="4" height="28" viewBox="0 0 4 28"><path d="M0 0 L3 2.5 L0 5 Z M0 23 L3 25.5 L0 28 Z" fill="#777"/><path d="M1 8 V20" stroke="#777" stroke-dasharray="1 1.5"/></svg>
<div style="left:2px;top:820px;width:1190px;height:17px;background:#f0f0f0"></div>
<div style="left:0px;top:820px;width:1192px;height:1px;background:#a0a0a0"></div>
<div style="left:3px;top:821px;width:15px;height:15px;background:#c8c8c8"></div>
<div style="left:20px;top:821px;width:15px;height:15px;background:#c8c8c8"></div>
<div style="left:37px;top:821px;width:15px;height:15px;background:#c8c8c8"></div>
<div style="left:54px;top:821px;width:15px;height:15px;background:#c8c8c8"></div>
<svg style="left:6px;top:824px;" width="10" height="10" viewBox="0 0 10 10"><path d="M1 1 V9" stroke="#fff" stroke-width="1.2"/><path d="M8 1 L3 5 L8 9 Z" fill="#9a9a9a"/></svg>
<svg style="left:23px;top:824px;" width="10" height="10" viewBox="0 0 10 10"><path d="M7 1 L2 5 L7 9 Z" fill="#9a9a9a"/></svg>
<svg style="left:40px;top:824px;" width="10" height="10" viewBox="0 0 10 10"><path d="M3 1 L8 5 L3 9 Z" fill="#9a9a9a"/><path d="M3 9 L8 5" stroke="#fff"/></svg>
<svg style="left:57px;top:824px;" width="10" height="10" viewBox="0 0 10 10"><path d="M2 1 L7 5 L2 9 Z" fill="#9a9a9a"/><path d="M9 1 V9" stroke="#fff" stroke-width="1.2"/></svg>
<svg style="left:68px;top:819px;" width="180" height="19" viewBox="0 0 180 19"><path d="M2 0.5 L9.5 17.5 H57 L61.5 0.5" fill="#fff" stroke="#6a6a6a"/><path d="M60 17.5 L64 1 H167 L161 17.5 Z" fill="#f0f0f0" stroke="#6a6a6a"/></svg>
<div style="left:79.50px;top:822.84px;font-family:'Liberation Sans',sans-serif;font-size:12px;line-height:12px;height:12px;color:#000;letter-spacing:-0.188px;font-weight:bold;">Vorlage</div>
<div style="left:134.00px;top:822.84px;font-family:'Liberation Sans',sans-serif;font-size:12px;line-height:12px;height:12px;color:#000;letter-spacing:-0.118px;">Jahres Auflistung</div>
<div style="left:1151px;top:820px;width:7px;height:17px;background:#fff;border:1px solid #888;border-top:none;box-sizing:border-box"></div>
<svg style="left:1162px;top:823px;" width="10" height="10" viewBox="0 0 10 10"><path d="M7 1 L3 5 L7 9" stroke="#333" stroke-width="1.3" fill="none"/></svg>
<svg style="left:1176px;top:823px;" width="10" height="10" viewBox="0 0 10 10"><path d="M3 1 L7 5 L3 9" stroke="#333" stroke-width="1.3" fill="none"/></svg>
<div style="left:1190px;top:820px;width:3px;height:17px;background:#000"></div>
<div style="left:1193px;top:820px;width:17px;height:17px;background:#f0f0f0"></div>
<div style="left:0px;top:837px;width:1600px;height:23px;background:#f0f0f0"></div>
<div style="left:0px;top:837px;width:1210px;height:1px;background:#e8e8e8"></div>
<div style="left:10.00px;top:844.84px;font-family:'Liberation Sans',sans-serif;font-size:12px;line-height:12px;height:12px;color:#000;letter-spacing:-0.060px;">Tabelle 1 / 2</div>
<div style="left:368px;top:842px;width:1px;height:16px;background:#b4b4b4"></div>
<div style="left:820px;top:842px;width:1px;height:16px;background:#b4b4b4"></div>
<div style="left:874px;top:842px;width:1px;height:16px;background:#b4b4b4"></div>
<div style="left:910px;top:842px;width:1px;height:16px;background:#b4b4b4"></div>
<div style="left:925px;top:842px;width:1px;height:16px;background:#b4b4b4"></div>
<div style="left:953px;top:842px;width:1px;height:16px;background:#b4b4b4"></div>
<div style="left:1401px;top:842px;width:1px;height:16px;background:#b4b4b4"></div>
<div style="left:1554px;top:842px;width:1px;height:16px;background:#b4b4b4"></div>
<div style="left:374.50px;top:844.84px;font-family:'Liberation Sans',sans-serif;font-size:12px;line-height:12px;height:12px;color:#000;letter-spacing:-0.411px;">PageStyle_Vorlage</div>
<div style="left:879.00px;top:845.34px;font-family:'Liberation Sans',sans-serif;font-size:12px;line-height:12px;height:12px;color:#000;letter-spacing:-1.500px;">STD</div>
<div style="left:912.50px;top:845.34px;font-family:'Liberation Sans',sans-serif;font-size:12px;line-height:12px;height:12px;color:#000;letter-spacing:0.000px;">*</div>
<div style="left:1105.00px;top:845.34px;font-family:'Liberation Sans',sans-serif;font-size:12px;line-height:12px;height:12px;color:#000;letter-spacing:-0.187px;">Fehler in der Parameterliste</div>
<svg style="left:1406px;top:844px;" width="14" height="14" viewBox="0 0 14 14"><circle cx="6.5" cy="6.5" r="5.3" fill="#d8e4f0" stroke="#34506e" stroke-width="1.2"/><path d="M3.8 6.5 H9.2" stroke="#1a2a40" stroke-width="1.4"/></svg>
<div style="left:1423px;top:849px;width:108px;height:2px;background:#fff;border-top:1px solid #a0a0a0;box-sizing:border-box"></div>
<svg style="left:1469px;top:844px;" width="12" height="13" viewBox="0 0 12 13"><path d="M6 0 V3" stroke="#5a6a80"/><circle cx="6" cy="7" r="3.8" fill="#7a9ac0" stroke="#3a5070"/></svg>
<svg style="left:1534px;top:844px;" width="14" height="14" viewBox="0 0 14 14"><circle cx="6.5" cy="6.5" r="5.3" fill="#d8e4f0" stroke="#34506e" stroke-width="1.2"/><path d="M3.8 6.5 H9.2 M6.5 3.8 V9.2" stroke="#1a2a40" stroke-width="1.4"/></svg>
<div style="left:1559.00px;top:845.34px;font-family:'Liberation Sans',sans-serif;font-size:12px;line-height:12px;height:12px;color:#000;letter-spacing:-0.755px;">100 %</div>
<div style="left:1217px;top:105px;width:383px;height:733px;background:#f0f0f0"></div>
<div style="left:1217px;top:105px;width:383px;height:1px;background:#c8c8c8"></div>
<div style="left:1598px;top:105px;width:1px;height:733px;background:#a0a0a0"></div>
<div style="left:1217px;top:837px;width:383px;height:1px;background:#a0a0a0"></div>
<div style="left:1221px;top:110px;width:339px;height:725px;background:#f0f0f0;border:1px solid #e2e2e2;box-sizing:border-box"></div>
<div style="left:1222px;top:111px;width:337px;height:25px;background:#f0f0f0"></div>
<div style="left:1231.00px;top:118.00px;font-family:'Liberation Sans',sans-serif;font-size:13px;line-height:13px;height:13px;color:#000;letter-spacing:-0.321px;font-weight:bold;">Eigenschaften</div>
<svg style="left:1545px;top:116px;" width="10" height="10" viewBox="0 0 10 10"><path d="M1 1 L9 9 M9 1 L1 9" stroke="#333" stroke-width="1.4"/></svg>
<div style="left:1222px;top:136px;width:337px;height:29px;background:linear-gradient(#e4e4e4,#f0f0f0)"></div>
<svg style="left:1226px;top:145px;" width="10" height="10" viewBox="0 0 10 10"><rect x="0.5" y="0.5" width="9" height="9" fill="#fafafa" stroke="#555"/><path d="M2.5 5 H7.5" stroke="#000"/></svg>
<div style="left:1240.50px;top:145.50px;font-family:'Liberation Sans',sans-serif;font-size:13px;line-height:13px;height:13px;color:#000;letter-spacing:0.245px;font-weight:bold;">Text</div>
<svg style="left:1541px;top:142px;" width="15" height="11" viewBox="0 0 15 11"><rect x="0.5" y="0.5" width="13" height="10" fill="#fff" stroke="#3a70c0"/><rect x="0.5" y="0.5" width="13" height="2.5" fill="#3a70c0"/><path d="M3 7.5 h1 M6.5 7.5 h1 M10 7.5 h1" stroke="#3a70c0"/></svg>
<div style="left:1227px;top:165px;width:267px;height:26px;background:#fff;border:1px solid #adadad;box-sizing:border-box"></div>
<div style="left:1475px;top:167px;width:17px;height:22px;background:#e1e1e1;border:1px solid #adadad;box-sizing:border-box"></div>
<svg style="left:1479px;top:176px;" width="10" height="6" viewBox="0 0 10 6"><path d="M0.5 0.5 L5 5 L9.5 0.5" stroke="#555" fill="none"/></svg>
<div style="left:1230.50px;top:172.42px;font-family:'Liberation Sans',sans-serif;font-size:12.5px;line-height:12.5px;height:12.5px;color:#000;letter-spacing:-0.003px;">Arial</div>
<div style="left:1499px;top:165px;width:54px;height:26px;background:#fff;border:1px solid #adadad;box-sizing:border-box"></div>
<div style="left:1534px;top:167px;width:17px;height:22px;background:#e1e1e1;border:1px solid #adadad;box-sizing:border-box"></div>
<svg style="left:1538px;top:176px;" width="10" height="6" viewBox="0 0 10 6"><path d="M0.5 0.5 L5 5 L9.5 0.5" stroke="#555" fill="none"/></svg>
<div style="left:1502.50px;top:172.42px;font-family:'Liberation Sans',sans-serif;font-size:12.5px;line-height:12.5px;height:12.5px;color:#000;letter-spacing:-1.400px;">10</div>
<div style="left:1227px;top:202px;width:140px;height:31px;background:linear-gradient(#f6f6f6,#fdfdfd);border:1px solid #e4e4e4;box-sizing:border-box"></div>
<div style="left:1229px;top:204px;width:24px;height:25px;background:#cce8ff;border:1px solid #99d1ff"></div>
<svg style="left:1233px;top:209px;" width="17" height="16" viewBox="0 0 17 16"><defs><linearGradient id="g" x1="0" y1="0" x2="1" y2="1"><stop offset="0" stop-color="#fff"/><stop offset="1" stop-color="#ddd"/></linearGradient></defs><rect x="0.8" y="0.8" width="15" height="14.4" rx="2.5" fill="url(#g)" stroke="#000" stroke-width="1.25"/><text x="8.3" y="12.6" font-family="Liberation Sans" font-weight="bold" font-size="12" fill="#000" text-anchor="middle">A</text></svg>
<svg style="left:1257px;top:209px;" width="17" height="16" viewBox="0 0 17 16"><defs><linearGradient id="g" x1="0" y1="0" x2="1" y2="1"><stop offset="0" stop-color="#fff"/><stop offset="1" stop-color="#ddd"/></linearGradient></defs><rect x="0.8" y="0.8" width="15" height="14.4" rx="2.5" fill="url(#g)" stroke="#000" stroke-width="1.25"/><text x="8.3" y="12.6" font-family="Liberation Sans" font-style="italic" font-size="12" fill="#000" text-anchor="middle">A</text></svg>
<svg style="left:1281px;top:209px;" width="17" height="16" viewBox="0 0 17 16"><defs><linearGradient id="g" x1="0" y1="0" x2="1" y2="1"><stop offset="0" stop-color="#fff"/><stop offset="1" stop-color="#ddd"/></linearGradient></defs><rect x="0.8" y="0.8" width="15" height="14.4" rx="2.5" fill="url(#g)" stroke="#000" stroke-width="1.25"/><text x="8.3" y="11.2" font-family="Liberation Sans" font-weight="bold" font-size="10.5" fill="#000" text-anchor="middle">A</text><path d="M4 13 H12.5" stroke="#000" stroke-width="1.1"/></svg>
<svg style="left:1305px;top:216px;" width="6" height="4" viewBox="0 0 6 4"><path d="M0 0 H6 L3 3.5 Z" fill="#000"/></svg>
<svg style="left:1318px;top:209px;" width="17" height="16" viewBox="0 0 17 16"><defs><linearGradient id="g" x1="0" y1="0" x2="1" y2="1"><stop offset="0" stop-color="#fff"/><stop offset="1" stop-color="#ddd"/></linearGradient></defs><rect x="0.8" y="0.8" width="15" height="14.4" rx="2.5" fill="url(#g)" stroke="#000" stroke-width="1.25"/><path d="M4.5 12 L7.5 3.5 H9 L12 12 H10.8 L10 10 H6.5 L5.7 12 Z M7.1 8.3 H9.4 L8.25 5.2 Z" fill="none" stroke="#000" stroke-width="0.9"/><path d="M3 7.5 H13.5" stroke="#000" stroke-width="1"/></svg>
<svg style="left:1344px;top:207px;" width="20" height="20" viewBox="0 0 20 20"><text x="11" y="17" font-family="Liberation Sans" font-weight="bold" font-size="19" fill="#888" text-anchor="middle">A</text><text x="10" y="16" font-family="Liberation Sans" font-weight="bold" font-size="19" fill="#111" text-anchor="middle">A</text></svg>
<div style="left:1500px;top:202px;width:54px;height:31px;background:linear-gradient(#f6f6f6,#fdfdfd);border:1px solid #e4e4e4;box-sizing:border-box"></div>
<svg style="left:1504px;top:209px;" width="17" height="16" viewBox="0 0 17 16"><defs><linearGradient id="g" x1="0" y1="0" x2="1" y2="1"><stop offset="0" stop-color="#fff"/><stop offset="1" stop-color="#ddd"/></linearGradient></defs><rect x="0.8" y="0.8" width="15" height="14.4" rx="2.5" fill="url(#g)" stroke="#000" stroke-width="1.25"/><text x="3" y="13" font-family="Liberation Sans" font-size="10" fill="#000">A</text><path d="M10.5 6 L12.5 3 L14.5 6 Z" fill="#000"/></svg>
<svg style="left:1529px;top:209px;" width="17" height="16" viewBox="0 0 17 16"><defs><linearGradient id="g" x1="0" y1="0" x2="1" y2="1"><stop offset="0" stop-color="#fff"/><stop offset="1" stop-color="#ddd"/></linearGradient></defs><rect x="0.8" y="0.8" width="15" height="14.4" rx="2.5" fill="url(#g)" stroke="#000" stroke-width="1.25"/><text x="4" y="13" font-family="Liberation Sans" font-size="9" fill="#000">A</text><path d="M10.5 3.5 L12.5 6.5 L14.5 3.5 Z" fill="#000"/></svg>
<div style="left:1228px;top:248px;width:54px;height:31px;background:linear-gradient(#f6f6f6,#fdfdfd);border:1px solid #e4e4e4;box-sizing:border-box"></div>
<svg style="left:1233px;top:255px;" width="17" height="16" viewBox="0 0 17 16"><defs><linearGradient id="g" x1="0" y1="0" x2="1" y2="1"><stop offset="0" stop-color="#fff"/><stop offset="1" stop-color="#ddd"/></linearGradient></defs><rect x="0.8" y="0.8" width="15" height="14.4" rx="2.5" fill="#f4f4f4" stroke="#c8c8c8" stroke-width="1.25"/><text x="3" y="13" font-family="Liberation Sans" font-size="10" fill="#bbb">A</text><path d="M10.5 7 L12.5 4 L14.5 7 Z" fill="#bbb"/></svg>
<svg style="left:1258px;top:255px;" width="17" height="16" viewBox="0 0 17 16"><defs><linearGradient id="g" x1="0" y1="0" x2="1" y2="1"><stop offset="0" stop-color="#fff"/><stop offset="1" stop-color="#ddd"/></linearGradient></defs><rect x="0.8" y="0.8" width="15" height="14.4" rx="2.5" fill="#f4f4f4" stroke="#c8c8c8" stroke-width="1.25"/><text x="3" y="13" font-family="Liberation Sans" font-size="10" fill="#bbb">A</text><path d="M10.5 9 L12.5 12 L14.5 9 Z" fill="#bbb"/></svg>
<div style="left:1291px;top:248px;width:40px;height:31px;background:linear-gradient(#f6f6f6,#fdfdfd);border:1px solid #e4e4e4;box-sizing:border-box"></div>
<svg style="left:1296px;top:254px;" width="16" height="18" viewBox="0 0 16 18"><path d="M1 9 L3.5 1 L6 9 M6 1 L8.5 9 L11 1 L14 9 M2 13.5 H14 M2 13.5 l2.5 -2 M2 13.5 l2.5 2 M14 13.5 l-2.5 -2 M14 13.5 l-2.5 2" stroke="#c0c0c0" stroke-width="1" fill="none"/></svg>
<svg style="left:1319px;top:262px;" width="6" height="4" viewBox="0 0 6 4"><path d="M0 0 H6 L3 3.5 Z" fill="#b0b0b0"/></svg>
<div style="left:1351px;top:248px;width:40px;height:31px;background:linear-gradient(#f6f6f6,#fdfdfd);border:1px solid #e4e4e4;box-sizing:border-box"></div>
<svg style="left:1356px;top:254px;" width="17" height="17" viewBox="0 0 17 17"><rect x="0.5" y="0.5" width="16" height="14" fill="#f4f4f4" stroke="#000"/><path d="M3.5 12.5 L7.3 2.5 H9.7 L13.5 12.5 H11.5 L10.7 10.3 H6.3 L5.5 12.5 Z M6.9 8.5 H10.1 L8.5 4.2 Z" fill="#3a5a88"/><rect x="0.5" y="14.5" width="16" height="2" fill="#fff" stroke="#000"/></svg>
<svg style="left:1379px;top:262px;" width="6" height="4" viewBox="0 0 6 4"><path d="M0 0 H6 L3 3.5 Z" fill="#000"/></svg>
<div style="left:1222px;top:285px;width:337px;height:28px;background:linear-gradient(#e4e4e4,#f0f0f0)"></div>
<svg style="left:1226px;top:294px;" width="10" height="10" viewBox="0 0 10 10"><rect x="0.5" y="0.5" width="9" height="9" fill="#fafafa" stroke="#555"/><path d="M2.5 5 H7.5" stroke="#000"/></svg>
<div style="left:1240.50px;top:295.50px;font-family:'Liberation Sans',sans-serif;font-size:13px;line-height:13px;height:13px;color:#000;letter-spacing:-0.256px;font-weight:bold;">Ausrichtung</div>
<svg style="left:1541px;top:291px;" width="15" height="11" viewBox="0 0 15 11"><rect x="0.5" y="0.5" width="13" height="10" fill="#fff" stroke="#3a70c0"/><rect x="0.5" y="0.5" width="13" height="2.5" fill="#3a70c0"/><path d="M3 7.5 h1 M6.5 7.5 h1 M10 7.5 h1" stroke="#3a70c0"/></svg>
<div style="left:1226px;top:313px;width:104px;height:31px;background:linear-gradient(#f6f6f6,#fdfdfd);border:1px solid #e4e4e4;box-sizing:border-box"></div>
<div style="left:1252px;top:315px;width:24px;height:25px;background:#cce8ff;border:1px solid #99d1ff"></div>
<svg style="left:1232px;top:321px;" width="16" height="16" viewBox="0 0 16 16"><path d="M0 0.5 H15" stroke="#2f5597" stroke-width="1"/><path d="M0 2.5 H10" stroke="#2f5597" stroke-width="1"/><path d="M0 4.5 H15" stroke="#2f5597" stroke-width="1"/><path d="M0 6.5 H10" stroke="#2f5597" stroke-width="1"/><path d="M0 8.5 H15" stroke="#2f5597" stroke-width="1"/><path d="M0 10.5 H10" stroke="#2f5597" stroke-width="1"/><path d="M0 12.5 H15" stroke="#2f5597" stroke-width="1"/></svg>
<div style="left:1351px;top:313px;width:79px;height:31px;background:linear-gradient(#f6f6f6,#fdfdfd);border:1px solid #e4e4e4;box-sizing:border-box"></div>
<svg style="left:1257px;top:321px;" width="16" height="16" viewBox="0 0 16 16"><path d="M0 0.5 H15" stroke="#2f5597" stroke-width="1"/><path d="M2.5 2.5 H12.5" stroke="#2f5597" stroke-width="1"/><path d="M0 4.5 H15" stroke="#2f5597" stroke-width="1"/><path d="M2.5 6.5 H12.5" stroke="#2f5597" stroke-width="1"/><path d="M0 8.5 H15" stroke="#2f5597" stroke-width="1"/><path d="M2.5 10.5 H12.5" stroke="#2f5597" stroke-width="1"/><path d="M0 12.5 H15" stroke="#2f5597" stroke-width="1"/></svg>
<svg style="left:1282px;top:321px;" width="16" height="16" viewBox="0 0 16 16"><path d="M0 0.5 H15" stroke="#2f5597" stroke-width="1"/><path d="M5 2.5 H15" stroke="#2f5597" stroke-width="1"/><path d="M0 4.5 H15" stroke="#2f5597" stroke-width="1"/><path d="M5 6.5 H15" stroke="#2f5597" stroke-width="1"/><path d="M0 8.5 H15" stroke="#2f5597" stroke-width="1"/><path d="M5 10.5 H15" stroke="#2f5597" stroke-width="1"/><path d="M0 12.5 H15" stroke="#2f5597" stroke-width="1"/></svg>
<svg style="left:1307px;top:321px;" width="16" height="16" viewBox="0 0 16 16"><path d="M0 0.5 H15" stroke="#2f5597" stroke-width="1"/><path d="M0 2.5 H15" stroke="#2f5597" stroke-width="1"/><path d="M0 4.5 H15" stroke="#2f5597" stroke-width="1"/><path d="M0 6.5 H15" stroke="#2f5597" stroke-width="1"/><path d="M0 8.5 H15" stroke="#2f5597" stroke-width="1"/><path d="M0 10.5 H15" stroke="#2f5597" stroke-width="1"/><path d="M0 12.5 H15" stroke="#2f5597" stroke-width="1"/></svg>
<svg style="left:1357px;top:321px;" width="16" height="16" viewBox="0 0 16 16"><path d="M0 0.5 H14" stroke="#2f5597" stroke-width="1"/><path d="M0 2.5 H9" stroke="#2f5597" stroke-width="1"/><path d="M0 4.5 H14" stroke="#2f5597" stroke-width="1"/></svg>
<svg style="left:1382px;top:325px;" width="16" height="16" viewBox="0 0 16 16"><path d="M0 0.5 H14" stroke="#2f5597" stroke-width="1"/><path d="M0 2.5 H9" stroke="#2f5597" stroke-width="1"/><path d="M0 4.5 H14" stroke="#2f5597" stroke-width="1"/></svg>
<svg style="left:1408px;top:329px;" width="16" height="16" viewBox="0 0 16 16"><path d="M0 0.5 H14" stroke="#2f5597" stroke-width="1"/><path d="M0 2.5 H9" stroke="#2f5597" stroke-width="1"/><path d="M0 4.5 H14" stroke="#2f5597" stroke-width="1"/></svg>
<div style="left:1227.00px;top:364.42px;font-family:'Liberation Sans',sans-serif;font-size:12.5px;line-height:12.5px;height:12.5px;color:#8c8c8c;letter-spacing:-0.020px;"><u>L</u>inker Einzug</div>
<div style="left:1227px;top:381px;width:96px;height:26px;background:#fff;border:1px solid #a9c0dc;box-sizing:border-box"></div>
<div style="left:1305px;top:384px;width:15px;height:20px;background:#f0f0f0;border:1px solid #e0e0e0;box-sizing:border-box"></div>
<svg style="left:1308px;top:386px;" width="9" height="16" viewBox="0 0 9 16"><path d="M1.5 5 L4.5 2 L7.5 5 Z M1.5 11 L4.5 14 L7.5 11 Z" fill="#666"/></svg>
<div style="left:1231.00px;top:389.42px;font-family:'Liberation Sans',sans-serif;font-size:12.5px;line-height:12.5px;height:12.5px;color:#8c8c8c;letter-spacing:0.383px;">0 pt</div>
<div style="left:1340px;top:364px;width:14px;height:14px;background:#fff;border:1px solid #333;box-sizing:border-box"></div>
<div style="left:1357.00px;top:365.92px;font-family:'Liberation Sans',sans-serif;font-size:12.5px;line-height:12.5px;height:12.5px;color:#000;letter-spacing:0.173px;">Zeilenum<u>b</u>ruch</div>
<div style="left:1340px;top:394px;width:14px;height:14px;background:#fff;border:1px solid #cfcfcf;box-sizing:border-box"></div>
<div style="left:1357.00px;top:395.92px;font-family:'Liberation Sans',sans-serif;font-size:12.5px;line-height:12.5px;height:12.5px;color:#8c8c8c;letter-spacing:0.205px;">Z<u>e</u>llen verbinden</div>
<div style="left:1227.00px;top:420.92px;font-family:'Liberation Sans',sans-serif;font-size:12.5px;line-height:12.5px;height:12.5px;color:#000;letter-spacing:0.211px;"><u>T</u>extausrichtung</div>
<svg style="left:1226px;top:442px;" width="52" height="52" viewBox="0 0 52 52"><circle cx="25.5" cy="25" r="24.3" fill="none" stroke="#4a6a9a" stroke-width="1.2"/><rect x="23.5" y="23" width="3" height="3" fill="#3a5a8a"/><path d="M25 24.5 H49" stroke="#3a5a8a" stroke-width="1.2"/></svg>
<div style="left:1298px;top:449px;width:139px;height:25px;background:#fff;border:1px solid #adadad;box-sizing:border-box"></div>
<div style="left:1418px;top:451px;width:17px;height:21px;background:#e1e1e1;border:1px solid #adadad;box-sizing:border-box"></div>
<svg style="left:1422px;top:459px;" width="10" height="6" viewBox="0 0 10 6"><path d="M0.5 0.5 L5 5 L9.5 0.5" stroke="#555" fill="none"/></svg>
<div style="left:1301.50px;top:456.92px;font-family:'Liberation Sans',sans-serif;font-size:12.5px;line-height:12.5px;height:12.5px;color:#000;letter-spacing:0.308px;">0 Grad</div>
<div style="left:1298px;top:489px;width:14px;height:14px;background:#fff;border:1px solid #333;box-sizing:border-box"></div>
<div style="left:1315.00px;top:490.42px;font-family:'Liberation Sans',sans-serif;font-size:12.5px;line-height:12.5px;height:12.5px;color:#000;letter-spacing:0.181px;"><u>S</u>enkrecht gestapelt</div>
<div style="left:1222px;top:513px;width:337px;height:27px;background:linear-gradient(#e4e4e4,#f0f0f0)"></div>
<svg style="left:1226px;top:521px;" width="10" height="10" viewBox="0 0 10 10"><rect x="0.5" y="0.5" width="9" height="9" fill="#fafafa" stroke="#555"/><path d="M2.5 5 H7.5" stroke="#000"/></svg>
<div style="left:1240.50px;top:522.50px;font-family:'Liberation Sans',sans-serif;font-size:13px;line-height:13px;height:13px;color:#000;letter-spacing:-0.146px;font-weight:bold;">Erscheinungsbild der Zelle</div>
<svg style="left:1541px;top:519px;" width="15" height="11" viewBox="0 0 15 11"><rect x="0.5" y="0.5" width="13" height="10" fill="#fff" stroke="#3a70c0"/><rect x="0.5" y="0.5" width="13" height="2.5" fill="#3a70c0"/><path d="M3 7.5 h1 M6.5 7.5 h1 M10 7.5 h1" stroke="#3a70c0"/></svg>
<div style="left:1227.00px;top:545.92px;font-family:'Liberation Sans',sans-serif;font-size:12.5px;line-height:12.5px;height:12.5px;color:#000;letter-spacing:0.243px;">Zell<u>h</u>intergrund:</div>
<div style="left:1225px;top:561px;width:101px;height:27px;background:linear-gradient(#f6f6f6,#fdfdfd);border:1px solid #e4e4e4;box-sizing:border-box"></div>
<svg style="left:1233px;top:566px;" width="16" height="15" viewBox="0 0 16 15"><path d="M1 8 L7 2 L12 7 L6 13 Z" fill="#a8c8f0" stroke="#2a4a80"/><path d="M5 2 Q9 0 13 5 Q14 8 13 11" stroke="#222" stroke-width="1.4" fill="none"/></svg>
<div style="left:1250px;top:567px;width:56px;height:13px;background:#fff;border:2px solid #2f5597;box-shadow:inset 0 0 0 1px #fff,inset 0 0 0 2px #000;box-sizing:border-box"></div>
<svg style="left:1313px;top:572px;" width="6" height="4" viewBox="0 0 6 4"><path d="M0 0 H6 L3 3.5 Z" fill="#000"/></svg>
<div style="left:1227.00px;top:609.92px;font-family:'Liberation Sans',sans-serif;font-size:12.5px;line-height:12.5px;height:12.5px;color:#000;letter-spacing:0.242px;">Zell<u>u</u>mrandung:</div>
<div style="left:1225px;top:625px;width:67px;height:58px;background:linear-gradient(#f6f6f6,#fdfdfd);border:1px solid #e4e4e4;box-sizing:border-box"></div>
<div style="left:1232px;top:633px;width:41px;height:42px;background:#fff;border:1.5px solid #000;box-sizing:border-box"></div>
<svg style="left:1233px;top:634px;" width="40" height="40" viewBox="0 0 40 40"><path d="M19.5 2 V38 M2 19.5 H38" stroke="#4a6aa0" stroke-dasharray="1.2 2" stroke-width="1"/></svg>
<svg style="left:1280px;top:653px;" width="6" height="4" viewBox="0 0 6 4"><path d="M0 0 H6 L3 3.5 Z" fill="#000"/></svg>
<div style="left:1304px;top:625px;width:100px;height:27px;background:linear-gradient(#f6f6f6,#fdfdfd);border:1px solid #e4e4e4;box-sizing:border-box"></div>
<div style="left:1311px;top:637px;width:75px;height:1.5px;background:#000"></div>
<svg style="left:1393px;top:636px;" width="6" height="4" viewBox="0 0 6 4"><path d="M0 0 H6 L3 3.5 Z" fill="#000"/></svg>
<div style="left:1304px;top:663px;width:100px;height:27px;background:linear-gradient(#f6f6f6,#fdfdfd);border:1px solid #e4e4e4;box-sizing:border-box"></div>
<svg style="left:1307px;top:668px;" width="18" height="16" viewBox="0 0 18 16"><path d="M2 13 L11 3 L14 6 L5 15 L1.5 15.5 Z" fill="#f0c040" stroke="#6a4a10"/><path d="M8 15 H17" stroke="#2f5597" stroke-width="1.6"/></svg>
<div style="left:1329px;top:669px;width:57px;height:14px;background:#000;border:2px solid #2f5597;box-shadow:inset 0 0 0 1px #fff;box-sizing:border-box"></div>
<svg style="left:1393px;top:674px;" width="6" height="4" viewBox="0 0 6 4"><path d="M0 0 H6 L3 3.5 Z" fill="#000"/></svg>
<div style="left:1227px;top:706px;width:14px;height:14px;background:#fff;border:1px solid #333;box-sizing:border-box"></div>
<div style="left:1244.00px;top:707.42px;font-family:'Liberation Sans',sans-serif;font-size:12.5px;line-height:12.5px;height:12.5px;color:#000;letter-spacing:0.153px;"><u>G</u>itternetzlinien anzeigen</div>
<div style="left:1222px;top:733px;width:337px;height:27px;background:linear-gradient(#e4e4e4,#f0f0f0)"></div>
<svg style="left:1226px;top:741px;" width="10" height="10" viewBox="0 0 10 10"><rect x="0.5" y="0.5" width="9" height="9" fill="#fafafa" stroke="#555"/><path d="M2.5 5 H7.5 M5 2.5 V7.5" stroke="#000"/></svg>
<div style="left:1240.50px;top:742.00px;font-family:'Liberation Sans',sans-serif;font-size:13px;line-height:13px;height:13px;color:#000;letter-spacing:0.128px;font-weight:bold;">Zahlenformat</div>
<svg style="left:1541px;top:739px;" width="15" height="11" viewBox="0 0 15 11"><rect x="0.5" y="0.5" width="13" height="10" fill="#fff" stroke="#3a70c0"/><rect x="0.5" y="0.5" width="13" height="2.5" fill="#3a70c0"/><path d="M3 7.5 h1 M6.5 7.5 h1 M10 7.5 h1" stroke="#3a70c0"/></svg>
<div style="left:1222px;top:760px;width:337px;height:1px;background:#e2e2e2"></div>
<svg style="left:1575px;top:120px;" width="12" height="12" viewBox="0 0 12 12"><path d="M1 2 H8 M1 4.5 H8 M1 7 H8" stroke="#222" stroke-width="1.1"/><path d="M6 8.5 H11 L8.5 11 Z" fill="#222"/></svg>
<div style="left:1565px;top:142px;width:30px;height:1px;background:#dadada"></div>
<div style="left:1564px;top:148px;width:32px;height:32px;background:#f4f4f4;border:1px solid #c8c8c8;border-radius:3px;box-sizing:border-box"></div>
<svg style="left:1569px;top:152px;" width="21" height="23" viewBox="0 0 21 23"><path d="M10.5 1 L19.5 5 V16 L10.5 21 L1.5 16 V5 Z" fill="#60c0e0" stroke="#1a8ab0"/><path d="M1.5 5 L10.5 9.5 L19.5 5 M10.5 9.5 V21" stroke="#1a6a90" fill="none"/><path d="M10.5 9.5 L19.5 5 V16 L10.5 21 Z" fill="#7ad04a"/><path d="M6 3 V18.5 M15 3 V18.5" stroke="#fff" stroke-width="0.8"/><path d="M1.5 10.5 L10.5 15 L19.5 10.5" stroke="#fff" stroke-width="0.8" fill="none"/></svg>
<svg style="left:1569px;top:186px;" width="22" height="24" viewBox="0 0 22 24"><circle cx="19" cy="4" r="2.5" fill="#f4d040"/><circle cx="12" cy="3" r="2" fill="#e060c0"/><circle cx="4" cy="9" r="2" fill="#e060a0"/><path d="M3 14 Q8 4 16 8 Q21 12 15 20 Z" fill="#1a3a6a"/><path d="M3 14 L12 12 L15 20 Z" fill="#3aa0e0"/><path d="M14 12 Q20 14 18 20" stroke="#5ab040" stroke-width="3" fill="none"/><path d="M4 21 H18" stroke="#aaa" stroke-width="1"/></svg>
<svg style="left:1569px;top:221px;" width="22" height="26" viewBox="0 0 22 26"><path d="M1 8 L16 2 L21 14 L6 20 Z" fill="#f8f8f8" stroke="#6a8ab0"/><path d="M3 9 L15 4.5 L18.5 13 L6.5 17.5 Z" fill="#8ac8f0"/><path d="M6.5 17.5 L10 12 L13 14 L18.5 13 Z" fill="#5aa040"/><path d="M3 24 H19" stroke="#aaa"/></svg>
<svg style="left:1568px;top:256px;" width="24" height="27" viewBox="0 0 24 27"><circle cx="12" cy="12" r="10" fill="#fff" stroke="#f0a020" stroke-width="2.5"/><path d="M14.5 6.5 L9.5 17.5" stroke="#3a6ac0" stroke-width="2"/><path d="M14.5 6.5 L12 13" stroke="#e03030" stroke-width="2"/><text x="10" y="7" font-family="Liberation Sans" font-size="5" fill="#000">N</text><path d="M4 25 H20" stroke="#aaa"/></svg>
<svg style="left:1567px;top:290px;" width="26" height="28" viewBox="0 0 26 28"><path d="M8.5 1.5 H19 L23.5 6 V23.5 H8.5 Z" fill="#eaf2fc" stroke="#3a70c0"/><path d="M19 1.5 V6 H23.5" fill="none" stroke="#3a70c0"/><text x="1" y="19" font-family="Liberation Serif" font-style="italic" font-size="18" fill="#1a3060">f</text><text x="9" y="19" font-family="Liberation Sans" font-style="italic" font-size="12" fill="#1a3a80">x</text><path d="M5 26 H21" stroke="#bbb"/></svg>
</body></html>
